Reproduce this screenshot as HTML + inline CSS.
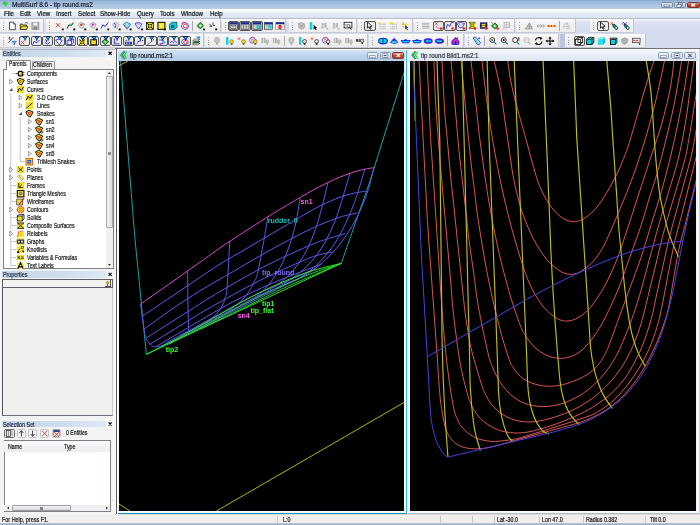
<!DOCTYPE html>
<html><head><meta charset="utf-8"><title>MultiSurf 8.6 - tip round.ms2</title>
<style>
html,body{margin:0;padding:0}
body{width:700px;height:525px;position:relative;overflow:hidden;background:#d6dcef;font-family:"Liberation Sans",sans-serif}
#r{position:absolute;left:0;top:0;width:700px;height:525px;overflow:hidden;filter:blur(0.35px)}
#r div{position:absolute;box-sizing:border-box}
#r span{position:absolute;white-space:nowrap;line-height:1;transform-origin:0 0;-webkit-text-stroke:0.22px currentColor}
#r svg{position:absolute;left:0;top:0}
</style></head><body><div id="r">
<div style="left:0px;top:0px;width:700px;height:9px;background:linear-gradient(#7d9fc8,#9ab8da 12%,#a6c1df 50%,#b8cee7);"></div>
<span style="left:12px;top:1.2px;font-size:7.4px;color:#1c1c28;transform:scaleX(0.87);">MultiSurf 8.6 - tip round.ms2</span>
<div style="left:661px;top:2px;width:11.5px;height:6px;background:linear-gradient(#dfe8f4,#b7c9e2);border:0.5px solid #7c8ea8;border-radius:1.5px"></div>
<div style="left:674px;top:2px;width:11.5px;height:6px;background:linear-gradient(#dfe8f4,#b7c9e2);border:0.5px solid #7c8ea8;border-radius:1.5px"></div>
<div style="left:687px;top:2px;width:12.5px;height:6px;background:linear-gradient(#e8a090,#c8402c 50%,#b83020);border:0.5px solid #7a3028;border-radius:1.5px"></div>
<div style="left:0px;top:8.6px;width:700px;height:10.4px;background:linear-gradient(#ffffff,#ffffff 18%,#e9eef8 30%,#dde4f2 85%,#cfd7e8);"></div>
<div style="left:0px;top:18.4px;width:700px;height:0.8px;background:#b4bccc;"></div>
<span style="left:4px;top:10.2px;font-size:7.4px;color:#101018;transform:scaleX(0.84);">File</span>
<span style="left:20px;top:10.2px;font-size:7.4px;color:#101018;transform:scaleX(0.84);">Edit</span>
<span style="left:37px;top:10.2px;font-size:7.4px;color:#101018;transform:scaleX(0.84);">View</span>
<span style="left:56px;top:10.2px;font-size:7.4px;color:#101018;transform:scaleX(0.84);">Insert</span>
<span style="left:78px;top:10.2px;font-size:7.4px;color:#101018;transform:scaleX(0.84);">Select</span>
<span style="left:100px;top:10.2px;font-size:7.4px;color:#101018;transform:scaleX(0.84);">Show-Hide</span>
<span style="left:137px;top:10.2px;font-size:7.4px;color:#101018;transform:scaleX(0.84);">Query</span>
<span style="left:160px;top:10.2px;font-size:7.4px;color:#101018;transform:scaleX(0.84);">Tools</span>
<span style="left:181px;top:10.2px;font-size:7.4px;color:#101018;transform:scaleX(0.84);">Window</span>
<span style="left:210px;top:10.2px;font-size:7.4px;color:#101018;transform:scaleX(0.84);">Help</span>
<div style="left:0px;top:19px;width:700px;height:29.5px;background:linear-gradient(#f6f8fd,#e3e7f5 8%,#d7dcef 20%,#d5dbee);"></div>
<div style="left:0px;top:514px;width:700px;height:11px;background:#f0eeee;"></div>
<div style="left:0px;top:514px;width:700px;height:0.8px;background:#dcd6d6;"></div>
<div style="left:0px;top:523.2px;width:700px;height:2px;background:linear-gradient(#c0c8d8,#98a8c0);"></div>
<span style="left:2px;top:515.6px;font-size:7.4px;color:#101010;transform:scaleX(0.735);">For Help, press F1.</span>
<span style="left:283px;top:515.6px;font-size:7.2px;color:#101010;transform:scaleX(0.735);">L:0</span>
<span style="left:497px;top:515.6px;font-size:7.2px;color:#101010;transform:scaleX(0.735);">Lat -30.0</span>
<span style="left:542px;top:515.6px;font-size:7.2px;color:#101010;transform:scaleX(0.735);">Lon 47.0</span>
<span style="left:586px;top:515.6px;font-size:7.2px;color:#101010;transform:scaleX(0.735);">Radius 0.382</span>
<span style="left:650px;top:515.6px;font-size:7.2px;color:#101010;transform:scaleX(0.735);">Tilt 0.0</span>
<div style="left:277px;top:515.5px;width:0.7px;height:7.5px;background:#c8c4c4;"></div>
<div style="left:440px;top:515.5px;width:0.7px;height:7.5px;background:#c8c4c4;"></div>
<div style="left:472px;top:515.5px;width:0.7px;height:7.5px;background:#c8c4c4;"></div>
<div style="left:494px;top:515.5px;width:0.7px;height:7.5px;background:#c8c4c4;"></div>
<div style="left:538.6px;top:515.5px;width:0.7px;height:7.5px;background:#c8c4c4;"></div>
<div style="left:582.6px;top:515.5px;width:0.7px;height:7.5px;background:#c8c4c4;"></div>
<div style="left:645px;top:515.5px;width:0.7px;height:7.5px;background:#c8c4c4;"></div>
<div style="left:115px;top:48px;width:585px;height:466px;background:#ffffff;"></div>
<div style="left:115px;top:48px;width:585px;height:1.4px;background:#707074;"></div>
<div style="left:115.5px;top:48px;width:1.5px;height:466px;background:#5c5858;"></div>
<div style="left:698.6px;top:49px;width:1.4px;height:465px;background:#d0d0d4;"></div>
<div style="left:117.6px;top:49.6px;width:288.4px;height:463.6px;background:#f0f6fc;"></div>
<div style="left:118px;top:49.8px;width:287.4px;height:11.2px;background:linear-gradient(#d4e4f4,#bcd4ec 50%,#b4cee8);"></div>
<div style="left:406px;top:49.6px;width:1px;height:464px;background:#34bce8;"></div>
<div style="left:117.6px;top:513px;width:289.4px;height:1px;background:#1898c0;"></div>
<div style="left:119px;top:61px;width:285.4px;height:450px;background:#000;"></div>
<div style="left:407px;top:49.6px;width:291.6px;height:464px;background:#f4f7fb;"></div>
<div style="left:408px;top:49.8px;width:290.4px;height:11.2px;background:linear-gradient(#f4f8fc,#e4ecf6 60%,#dce6f2);"></div>
<div style="left:407.6px;top:513px;width:291px;height:1px;background:#b8bcc4;"></div>
<div style="left:410px;top:61px;width:286px;height:449.6px;background:#000;"></div>
<span style="left:129.5px;top:52px;font-size:7.2px;color:#1a1a24;transform:scaleX(0.87);">tip round.ms2:1</span>
<span style="left:421px;top:52px;font-size:7.2px;color:#30343c;transform:scaleX(0.85);">tip round Bild1.ms2:1</span>
<div style="left:367px;top:52.3px;width:11.2px;height:6.4px;background:linear-gradient(#f0f5fb,#cfdcee);border:0.5px solid #8c9cb4;border-radius:1.5px"></div>
<div style="left:379.6px;top:52.3px;width:11px;height:6.4px;background:linear-gradient(#f0f5fb,#cfdcee);border:0.5px solid #8c9cb4;border-radius:1.5px"></div>
<div style="left:392.2px;top:52.3px;width:12.2px;height:6.4px;background:linear-gradient(#e8a898,#cc4a34 50%,#b8301c);border:0.5px solid #803428;border-radius:1.5px"></div>
<div style="left:657.8px;top:52.3px;width:11.4px;height:6.4px;background:linear-gradient(#f0f5fb,#cfdcee);border:0.5px solid #8c9cb4;border-radius:1.5px"></div>
<div style="left:671.4px;top:52.3px;width:11.2px;height:6.4px;background:linear-gradient(#f0f5fb,#cfdcee);border:0.5px solid #8c9cb4;border-radius:1.5px"></div>
<div style="left:684.4px;top:52.3px;width:11.2px;height:6.4px;background:linear-gradient(#f0f5fb,#cfdcee);border:0.5px solid #8c9cb4;border-radius:1.5px"></div>
<div style="left:0px;top:48.5px;width:115px;height:466px;background:#f4f4f4;"></div>
<div style="left:0px;top:48.5px;width:115px;height:0.8px;background:#b0b4bc;"></div>
<div style="left:1.5px;top:50px;width:104px;height:6.6px;background:linear-gradient(90deg,#c4d6ea,#cfdeef 60%,#dde8f4);"></div>
<span style="left:3px;top:50.2px;font-size:7.3px;color:#283040;transform:scaleX(0.735);">Entities</span>
<div style="left:31.6px;top:60.6px;width:23.6px;height:9px;background:#ececec;border:0.6px solid #9098a0;border-bottom:none;border-radius:1.5px 1.5px 0 0"></div>
<span style="left:33.4px;top:62.2px;font-size:6.9px;color:#181818;transform:scaleX(0.735);">Children</span>
<div style="left:2.6px;top:69px;width:111px;height:200px;background:#fff;border:0.7px solid #7c8288"></div>
<div style="left:5.6px;top:59.6px;width:25px;height:10.4px;background:#fff;border:0.6px solid #7c8288;border-bottom:none;border-radius:1.5px 1.5px 0 0"></div>
<span style="left:8.6px;top:61.4px;font-size:6.9px;color:#181818;transform:scaleX(0.735);">Parents</span>
<div style="left:105.6px;top:69.8px;width:7.4px;height:198.4px;background:#f0f0f0;"></div>
<div style="left:106px;top:76px;width:6.6px;height:152px;background:linear-gradient(90deg,#f4f4f4,#dcdcdc);border:0.5px solid #a8a8a8;border-radius:1px"></div>
<div style="left:107.6px;top:151.6px;width:3.6px;height:0.6px;background:#909090;"></div>
<div style="left:107.6px;top:153px;width:3.6px;height:0.6px;background:#909090;"></div>
<div style="left:107.6px;top:154.4px;width:3.6px;height:0.6px;background:#909090;"></div>
<span style="left:27px;top:69.8px;font-size:7.2px;color:#141414;transform:scaleX(0.735);">Components</span>
<span style="left:27px;top:77.8px;font-size:7.2px;color:#141414;transform:scaleX(0.735);">Surfaces</span>
<span style="left:27px;top:85.8px;font-size:7.2px;color:#141414;transform:scaleX(0.735);">Curves</span>
<span style="left:36.6px;top:93.8px;font-size:7.2px;color:#141414;transform:scaleX(0.735);">3-D Curves</span>
<span style="left:36.6px;top:101.8px;font-size:7.2px;color:#141414;transform:scaleX(0.735);">Lines</span>
<span style="left:36.6px;top:109.8px;font-size:7.2px;color:#141414;transform:scaleX(0.735);">Snakes</span>
<span style="left:45.7px;top:117.8px;font-size:7.2px;color:#141414;transform:scaleX(0.735);">sn1</span>
<span style="left:45.7px;top:125.8px;font-size:7.2px;color:#141414;transform:scaleX(0.735);">sn2</span>
<span style="left:45.7px;top:133.79999999999998px;font-size:7.2px;color:#141414;transform:scaleX(0.735);">sn3</span>
<span style="left:45.7px;top:141.79999999999998px;font-size:7.2px;color:#141414;transform:scaleX(0.735);">sn4</span>
<span style="left:45.7px;top:149.79999999999998px;font-size:7.2px;color:#141414;transform:scaleX(0.735);">sn5</span>
<span style="left:36.6px;top:157.79999999999998px;font-size:7.2px;color:#141414;transform:scaleX(0.735);">TriMesh Snakes</span>
<span style="left:27px;top:165.79999999999998px;font-size:7.2px;color:#141414;transform:scaleX(0.735);">Points</span>
<span style="left:27px;top:173.79999999999998px;font-size:7.2px;color:#141414;transform:scaleX(0.735);">Planes</span>
<span style="left:27px;top:181.79999999999998px;font-size:7.2px;color:#141414;transform:scaleX(0.735);">Frames</span>
<span style="left:27px;top:189.79999999999998px;font-size:7.2px;color:#141414;transform:scaleX(0.735);">Triangle Meshes</span>
<span style="left:27px;top:197.79999999999998px;font-size:7.2px;color:#141414;transform:scaleX(0.735);">Wireframes</span>
<span style="left:27px;top:205.79999999999998px;font-size:7.2px;color:#141414;transform:scaleX(0.735);">Contours</span>
<span style="left:27px;top:213.79999999999998px;font-size:7.2px;color:#141414;transform:scaleX(0.735);">Solids</span>
<span style="left:27px;top:221.79999999999998px;font-size:7.2px;color:#141414;transform:scaleX(0.735);">Composite Surfaces</span>
<span style="left:27px;top:229.79999999999998px;font-size:7.2px;color:#141414;transform:scaleX(0.735);">Relabels</span>
<span style="left:27px;top:237.79999999999998px;font-size:7.2px;color:#141414;transform:scaleX(0.735);">Graphs</span>
<span style="left:27px;top:245.79999999999998px;font-size:7.2px;color:#141414;transform:scaleX(0.735);">Knotlists</span>
<span style="left:27px;top:253.8px;font-size:7.2px;color:#141414;transform:scaleX(0.735);">Variables &amp; Formulas</span>
<span style="left:27px;top:261.8px;font-size:7.2px;color:#141414;transform:scaleX(0.735);">Text Labels</span>
<div style="left:1.5px;top:271.2px;width:104px;height:6.4px;background:linear-gradient(90deg,#c4d6ea,#cfdeef 60%,#dde8f4);"></div>
<span style="left:3px;top:271.4px;font-size:7.3px;color:#283040;transform:scaleX(0.735);">Properties</span>
<div style="left:2.4px;top:279.4px;width:111px;height:137px;background:#f0f0f0;border-left:1px solid #50505a;border-bottom:0.8px solid #70707a;border-right:0.6px solid #c8c8cc"></div>
<div style="left:2.4px;top:279.4px;width:111px;height:8.6px;background:#f2f2f2;border:0.8px solid #60606a"></div>
<div style="left:104.6px;top:280.4px;width:6.6px;height:6.8px;background:#f4f4f4;border-right:0.8px solid #505050;border-bottom:0.8px solid #505050"></div>
<div style="left:1.5px;top:421px;width:104px;height:6px;background:linear-gradient(90deg,#c4d6ea,#cfdeef 60%,#dde8f4);"></div>
<span style="left:3px;top:421.2px;font-size:7.3px;color:#283040;transform:scaleX(0.735);">Selection Set</span>
<div style="left:4.4px;top:428.6px;width:10.8px;height:9.6px;background:#ececec;border:0.7px solid #707070;border-radius:1.5px"></div>
<div style="left:16.6px;top:428.6px;width:9.6px;height:9.6px;background:#f6f6f6;border:0.5px solid #c4c4c4;border-radius:1.5px"></div>
<div style="left:27.6px;top:428.6px;width:9.6px;height:9.6px;background:#f6f6f6;border:0.5px solid #c4c4c4;border-radius:1.5px"></div>
<div style="left:39.6px;top:428.6px;width:9.6px;height:9.6px;background:#f6f6f6;border:0.5px solid #c4c4c4;border-radius:1.5px"></div>
<div style="left:51.6px;top:428.6px;width:9.6px;height:9.6px;background:#f6f6f6;border:0.5px solid #c4c4c4;border-radius:1.5px"></div>
<span style="left:66.4px;top:430px;font-size:7.1px;color:#141414;transform:scaleX(0.735);">0 Entities</span>
<div style="left:3.6px;top:440.4px;width:107.4px;height:71.6px;background:#fff;border:0.7px solid #7c8288"></div>
<div style="left:4.4px;top:441.2px;width:105.8px;height:11px;background:linear-gradient(#fbfbfb,#ececec);"></div>
<span style="left:8.4px;top:443px;font-size:7.2px;color:#141414;transform:scaleX(0.735);">Name</span>
<span style="left:64px;top:443px;font-size:7.2px;color:#141414;transform:scaleX(0.735);">Type</span>
<div style="left:4.4px;top:504.6px;width:105.8px;height:6.8px;background:#f0f0f0;"></div>
<div style="left:12.4px;top:505.2px;width:58.4px;height:5.6px;background:linear-gradient(#f6f6f6,#d8d8d8);border:0.5px solid #a0a0a0;border-radius:1px"></div>
<div style="left:39.6px;top:506.6px;width:0.6px;height:3px;background:#808080;"></div>
<div style="left:41px;top:506.6px;width:0.6px;height:3px;background:#808080;"></div>
<div style="left:42.4px;top:506.6px;width:0.6px;height:3px;background:#808080;"></div>
<div style="left:0px;top:19.4px;width:44.4px;height:13.8px;background:linear-gradient(#fbfbfb,#f1f1f1 40%,#ededed);border-right:0.6px solid #c2c6d2;border-bottom:0.6px solid #c8ccd6"></div>
<div style="left:3px;top:22.4px;width:1px;height:1px;background:#a0a4ac;"></div>
<div style="left:3px;top:24.599999999999998px;width:1px;height:1px;background:#a0a4ac;"></div>
<div style="left:3px;top:26.799999999999997px;width:1px;height:1px;background:#a0a4ac;"></div>
<div style="left:3px;top:29.0px;width:1px;height:1px;background:#a0a4ac;"></div>
<div style="left:46px;top:19.4px;width:174.8px;height:13.8px;background:linear-gradient(#fbfbfb,#f1f1f1 40%,#ededed);border-right:0.6px solid #c2c6d2;border-bottom:0.6px solid #c8ccd6"></div>
<div style="left:49px;top:22.4px;width:1px;height:1px;background:#a0a4ac;"></div>
<div style="left:49px;top:24.599999999999998px;width:1px;height:1px;background:#a0a4ac;"></div>
<div style="left:49px;top:26.799999999999997px;width:1px;height:1px;background:#a0a4ac;"></div>
<div style="left:49px;top:29.0px;width:1px;height:1px;background:#a0a4ac;"></div>
<div style="left:192px;top:21.4px;width:0.8px;height:10px;background:#a8a8b0;"></div>
<div style="left:222px;top:19.4px;width:64.39999999999998px;height:13.8px;background:linear-gradient(#fbfbfb,#f1f1f1 40%,#ededed);border-right:0.6px solid #c2c6d2;border-bottom:0.6px solid #c8ccd6"></div>
<div style="left:225px;top:22.4px;width:1px;height:1px;background:#a0a4ac;"></div>
<div style="left:225px;top:24.599999999999998px;width:1px;height:1px;background:#a0a4ac;"></div>
<div style="left:225px;top:26.799999999999997px;width:1px;height:1px;background:#a0a4ac;"></div>
<div style="left:225px;top:29.0px;width:1px;height:1px;background:#a0a4ac;"></div>
<div style="left:227.9px;top:21.0px;width:11.4px;height:10px;background:#ebebeb;border:0.9px solid #555;border-radius:2px"></div>
<div style="left:239.3px;top:21.0px;width:11.4px;height:10px;background:#ebebeb;border:0.9px solid #555;border-radius:2px"></div>
<div style="left:251.3px;top:21.0px;width:11.4px;height:10px;background:#ebebeb;border:0.9px solid #555;border-radius:2px"></div>
<div style="left:289px;top:19.4px;width:68px;height:13.8px;background:linear-gradient(#fbfbfb,#f1f1f1 40%,#ededed);border-right:0.6px solid #c2c6d2;border-bottom:0.6px solid #c8ccd6"></div>
<div style="left:292px;top:22.4px;width:1px;height:1px;background:#a0a4ac;"></div>
<div style="left:292px;top:24.599999999999998px;width:1px;height:1px;background:#a0a4ac;"></div>
<div style="left:292px;top:26.799999999999997px;width:1px;height:1px;background:#a0a4ac;"></div>
<div style="left:292px;top:29.0px;width:1px;height:1px;background:#a0a4ac;"></div>
<div style="left:358.4px;top:19.4px;width:54.60000000000002px;height:13.8px;background:linear-gradient(#fbfbfb,#f1f1f1 40%,#ededed);border-right:0.6px solid #c2c6d2;border-bottom:0.6px solid #c8ccd6"></div>
<div style="left:361.4px;top:22.4px;width:1px;height:1px;background:#a0a4ac;"></div>
<div style="left:361.4px;top:24.599999999999998px;width:1px;height:1px;background:#a0a4ac;"></div>
<div style="left:361.4px;top:26.799999999999997px;width:1px;height:1px;background:#a0a4ac;"></div>
<div style="left:361.4px;top:29.0px;width:1px;height:1px;background:#a0a4ac;"></div>
<div style="left:364.3px;top:21.0px;width:11.4px;height:10px;background:#ebebeb;border:0.9px solid #555;border-radius:2px"></div>
<div style="left:414.4px;top:19.4px;width:100.60000000000002px;height:13.8px;background:linear-gradient(#fbfbfb,#f1f1f1 40%,#ededed);border-right:0.6px solid #c2c6d2;border-bottom:0.6px solid #c8ccd6"></div>
<div style="left:417.4px;top:22.4px;width:1px;height:1px;background:#a0a4ac;"></div>
<div style="left:417.4px;top:24.599999999999998px;width:1px;height:1px;background:#a0a4ac;"></div>
<div style="left:417.4px;top:26.799999999999997px;width:1px;height:1px;background:#a0a4ac;"></div>
<div style="left:417.4px;top:29.0px;width:1px;height:1px;background:#a0a4ac;"></div>
<div style="left:432.90000000000003px;top:21.0px;width:11.4px;height:10px;background:#ebebeb;border:0.9px solid #555;border-radius:2px"></div>
<div style="left:444.3px;top:21.0px;width:11.4px;height:10px;background:#ebebeb;border:0.9px solid #555;border-radius:2px"></div>
<div style="left:455.5px;top:21.0px;width:11.4px;height:10px;background:#ebebeb;border:0.9px solid #555;border-radius:2px"></div>
<div style="left:516.4px;top:19.4px;width:60.0px;height:13.8px;background:linear-gradient(#fbfbfb,#f1f1f1 40%,#ededed);border-right:0.6px solid #c2c6d2;border-bottom:0.6px solid #c8ccd6"></div>
<div style="left:519.4px;top:22.4px;width:1px;height:1px;background:#a0a4ac;"></div>
<div style="left:519.4px;top:24.599999999999998px;width:1px;height:1px;background:#a0a4ac;"></div>
<div style="left:519.4px;top:26.799999999999997px;width:1px;height:1px;background:#a0a4ac;"></div>
<div style="left:519.4px;top:29.0px;width:1px;height:1px;background:#a0a4ac;"></div>
<div style="left:559px;top:21.4px;width:0.8px;height:10px;background:#a8a8b0;"></div>
<div style="left:590px;top:19.4px;width:44.299999999999955px;height:13.8px;background:linear-gradient(#fbfbfb,#f1f1f1 40%,#ededed);border-right:0.6px solid #c2c6d2;border-bottom:0.6px solid #c8ccd6"></div>
<div style="left:593px;top:22.4px;width:1px;height:1px;background:#a0a4ac;"></div>
<div style="left:593px;top:24.599999999999998px;width:1px;height:1px;background:#a0a4ac;"></div>
<div style="left:593px;top:26.799999999999997px;width:1px;height:1px;background:#a0a4ac;"></div>
<div style="left:593px;top:29.0px;width:1px;height:1px;background:#a0a4ac;"></div>
<div style="left:597.3px;top:21.0px;width:11.4px;height:10px;background:#ebebeb;border:0.9px solid #555;border-radius:2px"></div>
<div style="left:0px;top:34.3px;width:204px;height:13.8px;background:linear-gradient(#fbfbfb,#f1f1f1 40%,#ededed);border-right:0.6px solid #c2c6d2;border-bottom:0.6px solid #c8ccd6"></div>
<div style="left:3px;top:37.3px;width:1px;height:1px;background:#a0a4ac;"></div>
<div style="left:3px;top:39.5px;width:1px;height:1px;background:#a0a4ac;"></div>
<div style="left:3px;top:41.699999999999996px;width:1px;height:1px;background:#a0a4ac;"></div>
<div style="left:3px;top:43.9px;width:1px;height:1px;background:#a0a4ac;"></div>
<div style="left:18.8px;top:35.9px;width:11.4px;height:10px;background:#ebebeb;border:0.9px solid #555;border-radius:2px"></div>
<div style="left:30.599999999999998px;top:35.9px;width:11.4px;height:10px;background:#ebebeb;border:0.9px solid #555;border-radius:2px"></div>
<div style="left:41.9px;top:35.9px;width:11.4px;height:10px;background:#ebebeb;border:0.9px solid #555;border-radius:2px"></div>
<div style="left:53.5px;top:35.9px;width:11.4px;height:10px;background:#ebebeb;border:0.9px solid #555;border-radius:2px"></div>
<div style="left:64.89999999999999px;top:35.9px;width:11.4px;height:10px;background:#ebebeb;border:0.9px solid #555;border-radius:2px"></div>
<div style="left:76.5px;top:35.9px;width:11.4px;height:10px;background:#ebebeb;border:0.9px solid #555;border-radius:2px"></div>
<div style="left:87.89999999999999px;top:35.9px;width:11.4px;height:10px;background:#ebebeb;border:0.9px solid #555;border-radius:2px"></div>
<div style="left:99.7px;top:35.9px;width:11.4px;height:10px;background:#ebebeb;border:0.9px solid #555;border-radius:2px"></div>
<div style="left:110.89999999999999px;top:35.9px;width:11.4px;height:10px;background:#ebebeb;border:0.9px solid #555;border-radius:2px"></div>
<div style="left:122.7px;top:35.9px;width:11.4px;height:10px;background:#ebebeb;border:0.9px solid #555;border-radius:2px"></div>
<div style="left:134.10000000000002px;top:35.9px;width:11.4px;height:10px;background:#ebebeb;border:0.9px solid #555;border-radius:2px"></div>
<div style="left:145.3px;top:35.9px;width:11.4px;height:10px;background:#ebebeb;border:0.9px solid #555;border-radius:2px"></div>
<div style="left:156.5px;top:35.9px;width:11.4px;height:10px;background:#ebebeb;border:0.9px solid #555;border-radius:2px"></div>
<div style="left:167.9px;top:35.9px;width:11.4px;height:10px;background:#ebebeb;border:0.9px solid #555;border-radius:2px"></div>
<div style="left:179.3px;top:35.9px;width:11.4px;height:10px;background:#ebebeb;border:0.9px solid #555;border-radius:2px"></div>
<div style="left:205.4px;top:34.3px;width:162.6px;height:13.8px;background:linear-gradient(#fbfbfb,#f1f1f1 40%,#ededed);border-right:0.6px solid #c2c6d2;border-bottom:0.6px solid #c8ccd6"></div>
<div style="left:208.4px;top:37.3px;width:1px;height:1px;background:#a0a4ac;"></div>
<div style="left:208.4px;top:39.5px;width:1px;height:1px;background:#a0a4ac;"></div>
<div style="left:208.4px;top:41.699999999999996px;width:1px;height:1px;background:#a0a4ac;"></div>
<div style="left:208.4px;top:43.9px;width:1px;height:1px;background:#a0a4ac;"></div>
<div style="left:283.6px;top:36.3px;width:0.8px;height:10px;background:#a8a8b0;"></div>
<div style="left:369.4px;top:34.3px;width:94.60000000000002px;height:13.8px;background:linear-gradient(#fbfbfb,#f1f1f1 40%,#ededed);border-right:0.6px solid #c2c6d2;border-bottom:0.6px solid #c8ccd6"></div>
<div style="left:372.4px;top:37.3px;width:1px;height:1px;background:#a0a4ac;"></div>
<div style="left:372.4px;top:39.5px;width:1px;height:1px;background:#a0a4ac;"></div>
<div style="left:372.4px;top:41.699999999999996px;width:1px;height:1px;background:#a0a4ac;"></div>
<div style="left:372.4px;top:43.9px;width:1px;height:1px;background:#a0a4ac;"></div>
<div style="left:447px;top:36.3px;width:0.8px;height:10px;background:#a8a8b0;"></div>
<div style="left:465.4px;top:34.3px;width:93.60000000000002px;height:13.8px;background:linear-gradient(#fbfbfb,#f1f1f1 40%,#ededed);border-right:0.6px solid #c2c6d2;border-bottom:0.6px solid #c8ccd6"></div>
<div style="left:468.4px;top:37.3px;width:1px;height:1px;background:#a0a4ac;"></div>
<div style="left:468.4px;top:39.5px;width:1px;height:1px;background:#a0a4ac;"></div>
<div style="left:468.4px;top:41.699999999999996px;width:1px;height:1px;background:#a0a4ac;"></div>
<div style="left:468.4px;top:43.9px;width:1px;height:1px;background:#a0a4ac;"></div>
<div style="left:484.3px;top:36.3px;width:0.8px;height:10px;background:#a8a8b0;"></div>
<div style="left:559.6px;top:34.3px;width:5px;height:13.8px;background:#bcc4e0;"></div>
<div style="left:565px;top:34.3px;width:80.70000000000005px;height:13.8px;background:linear-gradient(#fbfbfb,#f1f1f1 40%,#ededed);border-right:0.6px solid #c2c6d2;border-bottom:0.6px solid #c8ccd6"></div>
<div style="left:568px;top:37.3px;width:1px;height:1px;background:#a0a4ac;"></div>
<div style="left:568px;top:39.5px;width:1px;height:1px;background:#a0a4ac;"></div>
<div style="left:568px;top:41.699999999999996px;width:1px;height:1px;background:#a0a4ac;"></div>
<div style="left:568px;top:43.9px;width:1px;height:1px;background:#a0a4ac;"></div>
<div style="left:573.5999999999999px;top:35.9px;width:11.4px;height:10px;background:#ebebeb;border:0.9px solid #555;border-radius:2px"></div>
<svg width="700" height="525" viewBox="0 0 700 525" font-family="Liberation Sans, sans-serif">
<path d="M2.5,4.2 L5.2,1.6 L5.2,2.8 L7.8,1.2 L8.6,3.6 L6.2,6.2 L4.6,7.2 L4.8,5.6 Z" fill="#28dc38" stroke="#e8d0f0" stroke-width="0.3"/>
<path d="M2.5,4.2 L5.2,1.6 L5.2,2.8" fill="none" stroke="#106018" stroke-width="0.5"/>
<rect x="664" y="5" width="5.4" height="1.8" fill="#fff" stroke="#44506a" stroke-width="0.5"/>
<rect x="678.6" y="3" width="4" height="2.8" fill="#e8eef8" stroke="#44506a" stroke-width="0.6"/><rect x="677" y="4.4" width="4" height="2.8" fill="#f4f8fc" stroke="#44506a" stroke-width="0.6"/>
<path d="M691.3,3.4 L695,6.6 M695,3.4 L691.3,6.6" stroke="#fff" stroke-width="1.3"/>
<path d="M123.4,51.6 L120.4,55.2 L123.4,58.800000000000004 L125,58.800000000000004 L122.6,55.2 L125,51.6 Z" fill="#20d838" stroke="#102060" stroke-width="0.4"/>
<path d="M126.2,51.6 L123.6,55.2 L126.2,58.800000000000004 L127.4,58.800000000000004 L125.2,55.2 L127.4,51.6 Z" fill="#20d838"/>
<path d="M414.4,51.6 L411.4,55.2 L414.4,58.800000000000004 L416,58.800000000000004 L413.6,55.2 L416,51.6 Z" fill="#20d838" stroke="#102060" stroke-width="0.4"/>
<path d="M417.2,51.6 L414.6,55.2 L417.2,58.800000000000004 L418.4,58.800000000000004 L416.2,55.2 L418.4,51.6 Z" fill="#20d838"/>
<rect x="369.6" y="55.8" width="6" height="1.9" fill="#fff" stroke="#4a566c" stroke-width="0.5"/>
<rect x="382.3" y="53.7" width="5.6" height="3.8" rx="0.8" fill="#fff" stroke="#4a5670" stroke-width="0.6"/><rect x="383.6" y="55.05" width="3" height="1.1" fill="#34447c"/>
<path d="M396.5,53.9 L400.1,57.1 M400.1,53.9 L396.5,57.1" stroke="#fff" stroke-width="1.2"/>
<rect x="660.5" y="55.8" width="6" height="1.9" fill="#fff" stroke="#4a566c" stroke-width="0.5"/>
<rect x="674.2" y="53.7" width="5.6" height="3.8" rx="0.8" fill="#fff" stroke="#4a5670" stroke-width="0.6"/><rect x="675.5" y="55.05" width="3" height="1.1" fill="#34447c"/>
<path d="M688.3,54.0 L691.7,57.0 M691.7,54.0 L688.3,57.0" stroke="#5a6478" stroke-width="1.1"/>
<g clip-path="url(#c1)">
<path d="M120.5,61.0 C121.0,66.8 122.4,84.3 123.3,95.9 C124.3,107.6 125.2,119.2 126.2,130.9 C127.1,142.5 128.1,154.2 129.0,165.8 C130.0,177.5 130.9,189.1 131.9,200.8 C132.8,212.4 133.6,223.3 134.7,235.7 C135.8,248.1 137.3,262.0 138.6,275.2 C139.9,288.3 141.2,301.4 142.4,314.6 C143.7,327.7 145.7,347.4 146.3,354.0" stroke="#14a4a4" stroke-width="1.0" fill="none" opacity="1.0"/>
<path d="M404.6,71.0 C402.6,77.2 396.8,95.6 392.9,108.0 C389.1,120.3 385.2,132.6 381.3,144.9 C377.5,157.3 373.2,171.2 369.7,181.9 C366.2,192.6 363.4,200.0 360.2,209.1 C357.1,218.1 353.9,227.1 350.8,236.2 C347.6,245.2 342.9,258.8 341.3,263.3" stroke="#14a4a4" stroke-width="1.0" fill="none" opacity="1.0"/>
<path d="M119.0,65.7 L127.8,61.0" stroke="#b4b418" stroke-width="1.0" fill="none" opacity="1.0"/>
<path d="M404.8,402.0 L216.5,511.0" stroke="#b4b418" stroke-width="1.0" fill="none" opacity="1.0"/>
<path d="M119.0,504.0 L130.0,511.0" stroke="#b4b418" stroke-width="1.0" fill="none" opacity="1.0"/>
<path d="M140.6,304.0 C141.2,308.4 143.2,324.3 144.1,330.0 C145.1,335.8 145.1,336.1 146.2,338.6 C147.4,341.1 149.7,343.8 150.9,345.1 C152.2,346.5 152.7,346.3 153.8,346.5 C154.9,346.8 155.5,347.0 157.4,346.7 C159.3,346.3 158.7,347.0 165.4,344.1 C172.0,341.2 187.3,334.2 197.6,329.2 C207.8,324.3 217.0,319.5 226.7,314.6 C236.4,309.7 246.1,304.8 255.8,300.0 C265.6,295.1 280.1,287.8 285.0,285.3" stroke="#5c58ea" stroke-width="1.0" fill="none" opacity="1.0"/>
<path d="M187.6,270.7 C187.7,275.6 187.7,289.3 187.9,300.0 C188.1,310.7 188.6,329.2 188.7,335.0" stroke="#5c58ea" stroke-width="1.0" fill="none" opacity="1.0"/>
<path d="M229.8,241.1 C229.3,248.7 227.9,277.7 227.1,287.2 C226.3,296.7 226.0,294.9 225.1,298.1 C224.3,301.2 223.5,303.5 222.0,306.2 C220.5,308.9 218.6,311.7 216.1,314.2 C213.7,316.8 210.9,319.2 207.5,321.5 C204.2,323.8 200.8,325.8 196.2,328.1 C191.6,330.4 182.6,334.2 179.9,335.4" stroke="#5c58ea" stroke-width="1.0" fill="none" opacity="1.0"/>
<path d="M268.0,216.7 C266.5,225.2 261.0,257.4 258.7,268.2 C256.4,279.1 255.9,277.7 254.2,281.7 C252.5,285.8 250.7,289.1 248.4,292.4 C246.1,295.7 243.6,298.7 240.4,301.7 C237.2,304.7 233.2,307.7 229.2,310.4 C225.1,313.2 222.4,314.8 215.9,318.2 C209.4,321.7 194.3,329.1 190.0,331.3" stroke="#5c58ea" stroke-width="1.0" fill="none" opacity="1.0"/>
<path d="M300.2,198.1 C299.4,202.3 297.5,215.2 295.8,222.9 C294.0,230.7 292.1,237.8 289.8,244.5 C287.6,251.2 285.1,257.4 282.3,263.1 C279.5,268.8 276.0,274.5 273.0,278.9 C270.0,283.2 267.5,286.1 264.4,289.2 C261.4,292.3 262.9,292.4 254.7,297.3 C246.4,302.3 221.6,315.3 215.0,318.9" stroke="#5c58ea" stroke-width="1.0" fill="none" opacity="1.0"/>
<path d="M328.0,182.8 C326.7,187.9 322.6,205.1 320.3,213.5 C318.0,221.8 316.4,226.8 314.2,232.9 C312.0,238.9 309.6,244.5 307.0,249.6 C304.4,254.7 301.7,259.1 298.7,263.4 C295.6,267.7 292.2,271.7 288.5,275.4 C284.7,279.1 280.8,282.3 276.3,285.5 C271.8,288.7 267.6,291.4 261.5,294.7 C255.4,298.0 243.5,303.5 239.8,305.3" stroke="#5c58ea" stroke-width="1.0" fill="none" opacity="1.0"/>
<path d="M349.9,173.3 C348.3,178.6 343.2,196.5 340.5,205.0 C337.8,213.5 336.0,218.3 333.6,224.3 C331.1,230.3 328.6,235.8 325.8,240.9 C323.0,246.0 320.3,250.4 316.9,254.9 C313.5,259.3 309.8,263.6 305.6,267.6 C301.4,271.6 296.7,275.4 291.7,278.9 C286.7,282.4 281.3,285.7 275.6,288.6 C269.9,291.4 260.7,295.0 257.7,296.2" stroke="#5c58ea" stroke-width="1.0" fill="none" opacity="1.0"/>
<path d="M365.0,168.7 C363.7,173.0 359.8,186.5 357.3,194.1 C354.8,201.7 352.4,208.1 349.7,214.4 C347.1,220.7 344.4,226.5 341.4,232.0 C338.5,237.4 335.5,242.4 332.2,247.1 C328.9,251.7 325.5,256.0 321.8,259.9 C318.2,263.9 314.2,267.5 310.2,270.6 C306.2,273.8 302.0,276.5 297.6,278.9 C293.2,281.3 286.0,284.0 283.7,285.0" stroke="#5c58ea" stroke-width="1.0" fill="none" opacity="1.0"/>
<path d="M373.8,168.0 C372.9,171.4 370.7,181.7 368.7,188.3 C366.7,194.9 364.3,201.3 361.6,207.5 C358.8,213.8 355.7,220.0 352.4,225.7 C349.1,231.4 345.5,236.8 341.6,241.9 C337.7,247.0 333.6,251.8 329.3,256.2 C324.9,260.6 320.5,264.5 315.7,268.2 C310.9,271.8 305.9,275.1 300.7,278.0 C295.6,280.8 287.5,284.1 284.9,285.3" stroke="#5c58ea" stroke-width="1.0" fill="none" opacity="1.0"/>
<path d="M142.3,316.2 C146.5,313.4 159.2,304.9 167.6,299.2 C176.1,293.5 184.5,287.9 192.9,282.2 C201.4,276.5 208.9,271.0 218.2,265.2 C227.6,259.3 238.7,253.2 248.9,247.2 C259.1,241.2 269.3,235.2 279.5,229.2 C289.7,223.2 302.3,215.6 310.1,211.3 C317.8,206.9 320.8,205.5 325.8,203.1 C330.8,200.8 335.5,198.9 340.1,197.2 C344.8,195.6 349.3,194.2 353.7,193.2 C358.1,192.2 364.4,191.4 366.5,191.1" stroke="#5c58ea" stroke-width="1.0" fill="none" opacity="1.0"/>
<path d="M144.1,329.1 C148.6,325.9 161.7,316.2 171.0,309.8 C180.3,303.5 189.7,297.2 200.0,290.8 C210.3,284.5 221.9,278.1 232.9,271.7 C243.8,265.3 254.5,258.8 265.8,252.5 C277.1,246.2 291.6,238.6 300.8,233.9 C310.0,229.2 314.5,227.1 321.1,224.3 C327.6,221.5 334.0,219.0 340.1,217.1 C346.1,215.2 354.5,213.6 357.4,212.9" stroke="#5c58ea" stroke-width="1.0" fill="none" opacity="1.0"/>
<path d="M146.3,337.9 C150.1,335.5 161.5,328.3 169.1,323.5 C176.7,318.7 184.3,313.9 191.9,309.1 C199.5,304.3 203.0,301.6 214.7,294.7 C226.5,287.8 246.9,275.7 262.3,267.6 C277.8,259.6 296.5,251.2 307.3,246.5 C318.0,241.7 320.6,241.2 327.0,239.1 C333.3,236.9 342.3,234.5 345.3,233.5" stroke="#5c58ea" stroke-width="1.0" fill="none" opacity="1.0"/>
<path d="M149.6,344.4 C154.6,341.4 169.5,332.3 179.4,326.2 C189.4,320.2 195.9,315.6 209.3,308.1 C222.6,300.5 243.5,288.8 259.4,280.7 C275.3,272.7 294.5,264.3 304.5,260.0 C314.5,255.6 314.7,256.2 319.4,254.8 C324.1,253.5 330.5,252.4 332.7,251.9" stroke="#5c58ea" stroke-width="1.0" fill="none" opacity="1.0"/>
<path d="M156.1,346.6 C161.0,343.7 175.6,335.1 185.3,329.3 C195.1,323.5 205.1,317.3 214.6,312.0 C224.0,306.6 231.6,302.3 241.8,297.3 C252.0,292.2 262.3,287.4 275.7,281.8 C289.0,276.3 314.2,266.8 321.9,263.8" stroke="#5c58ea" stroke-width="1.0" fill="none" opacity="1.0"/>
<path d="M165.2,343.5 C170.0,340.9 184.3,333.1 193.9,327.9 C203.5,322.7 213.1,317.5 222.7,312.3 C232.3,307.1 241.3,301.6 251.4,296.7 C261.6,291.7 272.9,287.3 283.7,282.6 C294.4,277.8 310.6,270.8 316.0,268.4" stroke="#5c58ea" stroke-width="1.0" fill="none" opacity="1.0"/>
<path d="M140.7,304.1 C145.3,300.8 159.4,290.9 168.7,284.3 C178.1,277.7 187.5,271.1 196.8,264.5 C206.2,257.9 214.3,251.8 224.9,244.6 C235.5,237.5 249.0,228.7 260.6,221.4 C272.2,214.0 284.6,206.6 294.4,200.8 C304.3,195.0 312.1,190.6 319.5,186.7 C327.0,182.9 332.8,180.1 339.2,177.4 C345.7,174.8 352.6,172.3 358.4,170.7 C364.2,169.1 371.4,168.1 374.0,167.6" stroke="#d848cc" stroke-width="1.0" fill="none" opacity="1.0"/>
<path d="M146.3,354.3 L341.3,263.3" stroke="#28e428" stroke-width="1.0" fill="none" opacity="1.0"/>
<path d="M146.4,354.4 C151.6,351.7 166.7,344.2 177.4,338.4 C188.1,332.6 199.6,325.9 210.8,319.6 C221.9,313.3 233.9,306.3 244.2,300.8 C254.4,295.3 261.8,291.3 272.5,286.5 C283.1,281.7 296.6,275.9 308.1,272.0 C319.6,268.2 335.8,264.7 341.4,263.3" stroke="#28e428" stroke-width="1.0" fill="none" opacity="1.0"/>
<path d="M170.0,343.6 C174.0,341.5 185.9,335.1 193.9,330.9 C201.8,326.7 209.8,322.5 217.8,318.3 C225.7,314.1 232.1,310.5 241.6,305.7 C251.2,300.8 263.8,294.3 275.0,289.1 C286.3,283.9 298.2,278.6 309.3,274.3 C320.3,270.1 336.0,265.2 341.4,263.4" stroke="#28e428" stroke-width="0.9" fill="none" opacity="1.0"/>
<path d="M200.0,329.0 C204.8,326.7 219.2,319.6 228.9,315.0 C238.5,310.3 248.1,305.6 257.7,300.9 C267.3,296.2 272.6,293.1 286.5,286.8 C300.5,280.5 332.2,267.3 341.3,263.3" stroke="#28e428" stroke-width="0.9" fill="none" opacity="1.0"/>
</g>
<text x="300.5" y="203.6" font-size="7" font-weight="bold" fill="#ff5cf0">sn1</text>
<text x="267.7" y="223.4" font-size="7" font-weight="bold" fill="#18c0c0">rudder_0</text>
<text x="262" y="274.6" font-size="7" font-weight="bold" fill="#7874ff">tip_round</text>
<text x="262" y="306" font-size="7" font-weight="bold" fill="#38ff38">tip1</text>
<text x="250.6" y="312.6" font-size="7" font-weight="bold" fill="#38ff38">tip_flat</text>
<text x="237.7" y="318.2" font-size="7" font-weight="bold" fill="#ff5cf0">sn4</text>
<text x="165.7" y="352" font-size="7" font-weight="bold" fill="#38ff38">tip2</text>
<g clip-path="url(#c2)">
<path d="M418.7,55.0 C419.0,60.5 419.9,77.0 420.4,88.1 C421.0,99.1 421.6,110.1 422.2,121.1 C422.8,132.2 423.3,143.2 423.9,154.2 C424.5,165.2 425.1,176.2 425.7,187.3 C426.2,198.3 426.7,209.0 427.4,220.3 C428.1,231.7 429.1,243.8 429.9,255.5 C430.8,267.2 431.6,278.9 432.4,290.7 C433.3,302.4 434.1,314.1 435.0,325.8 C435.8,337.6 436.6,349.3 437.5,361.0 C438.3,372.7 439.1,386.7 440.0,396.2 C441.0,405.7 442.1,412.2 443.2,418.1 C444.3,424.0 445.2,427.8 446.8,431.6 C448.4,435.3 450.2,438.1 452.6,440.6 C455.1,443.1 457.7,445.2 461.3,446.5 C465.0,447.9 469.7,448.7 474.5,448.8 C479.4,448.9 482.8,448.8 490.3,447.2 C497.9,445.6 509.9,441.8 519.7,439.1 C529.5,436.4 539.3,433.7 549.1,431.0 C558.9,428.2 571.1,425.2 578.5,422.8 C585.9,420.5 588.8,419.1 593.5,416.9 C598.1,414.8 602.2,412.6 606.3,409.9 C610.3,407.3 614.2,404.3 617.9,401.0 C621.6,397.7 624.8,394.4 628.4,390.2 C631.9,386.0 635.9,380.7 639.2,375.7 C642.6,370.6 645.5,365.7 648.5,359.9 C651.6,354.1 654.8,347.3 657.5,341.0 C660.1,334.7 662.5,328.5 664.5,322.1 C666.5,315.8 667.3,314.2 669.5,302.8 C671.7,291.4 675.3,267.0 677.9,253.9 C680.5,240.8 682.8,234.1 685.3,224.3 C687.7,214.4 690.2,204.5 692.6,194.6 C695.1,184.8 698.8,169.9 700.0,165.0" stroke="#dc5454" stroke-width="1.0" fill="none" opacity="1.0"/>
<path d="M426.8,55.0 C427.0,59.5 427.6,73.1 428.0,82.2 C428.4,91.2 428.9,100.3 429.3,109.3 C429.7,118.4 430.0,126.5 430.5,136.5 C431.1,146.5 432.0,158.6 432.7,169.6 C433.5,180.6 434.2,191.7 434.9,202.7 C435.6,213.8 436.4,224.8 437.1,235.8 C437.8,246.9 438.6,257.9 439.3,268.9 C440.0,280.0 440.5,289.5 441.5,302.0 C442.4,314.5 443.6,331.0 444.9,343.9 C446.1,356.8 447.5,368.6 449.0,379.3 C450.5,390.1 452.2,401.3 453.7,408.2 C455.2,415.2 456.8,418.0 458.1,421.1 C459.4,424.2 460.2,424.8 461.7,426.7 C463.2,428.6 465.2,430.7 467.2,432.4 C469.2,434.1 471.7,435.7 473.8,436.8 C475.9,438.0 477.6,438.7 480.0,439.4 C482.3,440.0 485.2,440.6 487.9,441.0 C490.5,441.3 491.7,441.6 495.9,441.4 C500.2,441.1 507.7,440.4 513.3,439.3 C518.8,438.3 517.2,438.8 529.3,435.1 C541.3,431.4 574.1,421.2 585.7,417.2 C597.4,413.1 595.1,413.1 599.0,410.9 C602.8,408.8 605.4,407.1 608.9,404.2 C612.4,401.4 616.3,397.7 619.9,393.8 C623.5,390.0 627.3,385.2 630.5,381.0 C633.6,376.7 636.3,372.7 638.9,368.4 C641.5,364.1 643.9,359.7 646.1,355.3 C648.3,350.8 650.3,346.2 652.1,341.6 C653.9,336.9 655.2,333.1 656.8,327.4 C658.4,321.8 659.0,320.8 661.7,307.7 C664.4,294.6 669.7,264.6 673.1,248.9 C676.5,233.1 679.1,225.1 682.1,213.2 C685.0,201.4 688.0,189.5 691.0,177.6 C694.0,165.7 698.5,147.9 700.0,142.0" stroke="#dc5454" stroke-width="1.0" fill="none" opacity="1.0"/>
<path d="M433.8,55.0 C434.1,62.6 434.6,84.2 435.5,100.5 C436.5,116.8 438.2,138.5 439.4,152.7 C440.5,166.9 441.3,174.6 442.2,185.5 C443.2,196.5 444.2,207.4 445.1,218.3 C446.1,229.3 447.0,240.2 448.0,251.2 C449.0,262.1 449.9,273.0 450.9,284.0 C451.8,294.9 452.2,303.6 453.8,316.8 C455.3,330.0 457.9,350.2 460.2,363.3 C462.5,376.4 466.0,388.4 467.8,395.3 C469.6,402.1 469.8,401.6 471.0,404.3 C472.1,407.0 473.1,409.0 474.7,411.4 C476.2,413.7 478.3,416.3 480.4,418.5 C482.5,420.6 484.9,422.6 487.4,424.3 C490.0,426.0 492.7,427.5 495.5,428.7 C498.3,429.9 500.6,430.9 504.3,431.6 C507.9,432.3 512.6,433.1 517.4,433.0 C522.3,432.9 526.8,432.5 533.4,430.9 C540.0,429.3 549.4,426.3 557.1,423.6 C564.8,420.8 573.2,417.3 579.7,414.2 C586.1,411.2 590.9,408.4 595.9,405.2 C600.9,402.0 605.4,398.6 609.5,395.1 C613.6,391.5 617.1,387.8 620.5,383.8 C623.9,379.7 626.3,376.7 629.9,370.7 C633.4,364.6 638.1,356.0 641.6,347.5 C645.2,338.9 648.6,328.5 651.2,319.2 C653.8,310.0 655.2,301.0 657.2,291.9 C659.3,282.8 661.3,273.7 663.3,264.6 C665.3,255.5 667.1,246.4 669.4,237.2 C671.6,228.1 674.3,218.8 676.8,209.6 C679.3,200.4 681.8,191.2 684.3,182.0 C686.7,172.7 689.4,164.6 691.7,154.3 C694.0,144.0 696.9,125.7 698.0,120.0" stroke="#dc5454" stroke-width="1.0" fill="none" opacity="1.0"/>
<path d="M441.7,55.0 C442.2,63.9 443.6,94.1 444.5,108.2 C445.4,122.2 446.4,129.0 447.3,139.4 C448.2,149.9 449.0,159.9 450.1,170.7 C451.1,181.6 452.5,193.3 453.7,204.6 C454.8,215.9 456.0,227.2 457.2,238.6 C458.4,249.9 459.6,261.2 460.8,272.5 C462.0,283.8 463.2,296.7 464.4,306.4 C465.5,316.1 466.5,323.1 467.8,330.7 C469.1,338.3 469.7,343.0 472.0,352.1 C474.4,361.2 479.5,378.0 481.8,385.3 C484.2,392.5 484.6,392.5 486.1,395.6 C487.6,398.7 489.1,401.3 491.0,403.8 C492.9,406.3 494.8,408.5 497.4,410.6 C499.9,412.8 503.3,415.0 506.2,416.6 C509.1,418.1 511.7,419.1 514.9,420.0 C518.1,420.9 521.5,421.7 525.5,421.9 C529.6,422.1 534.1,421.9 539.3,421.0 C544.5,420.1 551.3,418.2 556.7,416.5 C562.2,414.7 567.0,412.9 571.9,410.6 C576.8,408.2 581.6,405.6 586.2,402.6 C590.8,399.6 595.2,396.3 599.3,392.7 C603.5,389.1 607.4,385.2 611.0,381.2 C614.6,377.1 618.0,372.7 621.0,368.2 C624.0,363.8 626.6,359.2 629.1,354.2 C631.6,349.2 633.9,344.0 636.1,338.0 C638.4,332.1 640.3,326.7 642.5,318.5 C644.8,310.3 647.4,298.8 649.8,288.9 C652.2,279.0 654.7,269.1 657.1,259.3 C659.5,249.4 661.5,240.2 664.4,229.7 C667.2,219.2 670.9,207.4 674.2,196.2 C677.5,185.1 681.6,172.2 684.0,162.8 C686.5,153.4 687.0,149.7 688.7,140.1 C690.5,130.5 692.5,116.7 694.4,105.0 C696.3,93.4 699.1,75.8 700.0,70.0" stroke="#dc5454" stroke-width="1.0" fill="none" opacity="1.0"/>
<path d="M450.5,55.0 C451.0,60.3 452.4,76.3 453.4,86.9 C454.3,97.6 455.2,108.2 456.2,118.8 C457.1,129.5 458.0,140.4 459.0,150.7 C460.1,161.1 461.3,170.9 462.4,180.9 C463.6,191.0 464.7,201.0 465.8,211.1 C467.0,221.2 467.9,230.7 469.2,241.3 C470.6,251.8 472.3,263.3 473.9,274.4 C475.4,285.4 476.2,294.4 478.5,307.5 C480.9,320.5 485.7,343.1 487.9,352.7 C490.2,362.4 490.4,361.5 491.9,365.5 C493.4,369.5 495.1,373.2 496.8,376.5 C498.6,379.9 500.4,382.7 502.5,385.6 C504.6,388.4 507.1,391.2 509.4,393.4 C511.7,395.7 513.9,397.4 516.4,399.1 C518.9,400.7 521.5,402.1 524.3,403.2 C527.0,404.3 529.7,405.1 532.9,405.7 C536.1,406.2 539.6,406.6 543.3,406.6 C547.0,406.5 551.2,406.1 555.1,405.4 C558.9,404.6 562.6,403.6 566.5,402.1 C570.4,400.5 574.6,398.5 578.4,396.3 C582.3,394.0 586.0,391.4 589.5,388.6 C593.0,385.8 596.2,382.8 599.4,379.4 C602.6,376.0 605.9,372.0 608.7,368.0 C611.5,364.1 613.8,360.2 616.2,355.8 C618.6,351.4 620.4,347.7 622.9,341.7 C625.5,335.7 628.8,327.3 631.6,319.7 C634.3,312.1 636.5,305.8 639.4,295.9 C642.4,286.0 645.9,272.2 649.1,260.3 C652.4,248.5 655.6,236.0 658.8,224.8 C662.1,213.5 665.2,203.3 668.4,192.5 C671.6,181.8 675.1,171.9 677.9,160.3 C680.8,148.7 683.4,134.8 685.4,122.9 C687.5,111.0 688.6,100.3 690.2,89.0 C691.8,77.6 694.2,60.7 694.9,55.0" stroke="#dc5454" stroke-width="1.0" fill="none" opacity="1.0"/>
<path d="M460.4,55.0 C460.9,60.7 462.6,77.7 463.7,89.0 C464.8,100.3 465.9,111.7 467.0,123.0 C468.1,134.3 469.2,146.2 470.4,157.0 C471.6,167.9 472.9,177.8 474.2,188.2 C475.5,198.6 475.8,204.4 478.1,219.3 C480.4,234.3 484.4,259.3 488.1,277.7 C491.7,296.1 496.6,316.1 500.1,329.7 C503.7,343.3 507.1,353.3 509.2,359.5 C511.3,365.7 511.5,364.7 512.9,367.1 C514.3,369.4 515.8,371.7 517.6,373.7 C519.5,375.7 521.6,377.5 523.9,379.1 C526.2,380.7 528.9,382.0 531.6,383.0 C534.4,384.1 537.4,384.9 540.3,385.4 C543.2,386.0 546.3,386.3 549.3,386.3 C552.2,386.3 554.9,386.1 558.0,385.6 C561.1,385.1 564.1,384.4 567.6,383.3 C571.2,382.2 575.9,380.4 579.2,378.9 C582.6,377.3 585.5,375.6 587.9,374.1 C590.2,372.6 591.7,371.5 593.6,369.7 C595.4,367.9 597.5,365.7 599.2,363.5 C600.9,361.3 602.2,359.3 603.8,356.4 C605.3,353.5 606.0,352.9 608.6,346.3 C611.2,339.7 615.8,326.6 619.4,316.7 C623.0,306.9 626.6,297.0 630.2,287.2 C633.8,277.3 637.5,268.0 641.0,257.6 C644.5,247.2 647.8,235.6 651.2,224.6 C654.6,213.6 658.2,202.9 661.4,191.6 C664.6,180.3 667.6,168.4 670.5,156.8 C673.3,145.2 675.9,133.3 678.3,121.8 C680.6,110.3 682.7,98.9 684.6,87.8 C686.4,76.7 688.6,60.5 689.4,55.0" stroke="#dc5454" stroke-width="1.0" fill="none" opacity="1.0"/>
<path d="M470.3,54.9 C470.9,59.8 472.5,74.2 473.6,83.9 C474.7,93.5 475.8,103.2 476.9,112.8 C478.0,122.5 478.3,127.7 480.2,141.8 C482.1,155.9 485.2,179.7 488.2,197.5 C491.2,215.4 494.4,232.3 498.1,248.7 C501.8,265.1 506.6,283.1 510.3,295.8 C514.0,308.5 517.8,318.8 520.2,325.2 C522.6,331.6 523.0,331.4 524.7,334.2 C526.3,337.1 528.1,339.8 530.2,342.3 C532.2,344.8 534.6,347.3 537.0,349.3 C539.3,351.2 541.7,352.8 544.3,354.1 C546.9,355.5 549.9,356.7 552.5,357.4 C555.2,358.1 557.6,358.4 560.1,358.4 C562.6,358.4 565.0,358.2 567.6,357.5 C570.2,356.9 573.3,355.7 575.7,354.4 C578.1,353.2 579.9,351.8 582.1,350.0 C584.2,348.2 586.2,346.2 588.4,343.6 C590.7,340.9 592.8,338.1 595.4,334.2 C598.0,330.3 600.0,327.7 603.8,320.3 C607.5,313.0 613.8,300.2 618.0,289.9 C622.3,279.7 625.5,269.1 629.3,258.6 C633.0,248.2 637.0,237.7 640.5,227.3 C643.9,216.9 646.8,206.6 649.9,196.2 C653.1,185.9 655.5,179.8 659.4,165.2 C663.3,150.6 669.3,127.0 673.2,108.7 C677.1,90.3 681.1,63.9 682.6,55.0" stroke="#dc5454" stroke-width="1.0" fill="none" opacity="1.0"/>
<path d="M481.3,55.0 C482.5,64.8 485.9,95.4 488.6,113.9 C491.3,132.4 494.1,149.3 497.4,166.1 C500.6,183.0 504.3,199.4 508.2,214.9 C512.0,230.4 517.0,247.2 520.7,259.0 C524.4,270.7 527.0,278.0 530.3,285.3 C533.6,292.7 537.8,298.9 540.7,303.2 C543.5,307.5 545.1,308.7 547.3,311.0 C549.6,313.3 552.1,315.3 554.3,316.8 C556.4,318.3 558.2,319.2 560.2,320.0 C562.2,320.7 564.4,321.1 566.4,321.1 C568.5,321.2 570.7,320.7 572.7,320.1 C574.8,319.4 576.8,318.5 578.9,317.2 C580.9,316.0 583.2,314.3 585.2,312.6 C587.2,310.8 587.7,311.0 590.8,306.9 C593.9,302.8 599.6,295.0 603.7,287.8 C607.7,280.6 611.9,271.6 615.1,263.9 C618.3,256.3 620.1,250.6 623.1,242.0 C626.0,233.4 629.6,222.2 632.8,212.3 C636.0,202.4 639.3,192.5 642.5,182.6 C645.7,172.7 649.0,162.8 652.2,152.9 C655.5,143.0 658.9,134.1 661.9,123.2 C665.0,112.2 668.4,98.4 670.5,87.1 C672.6,75.7 673.9,60.3 674.6,54.9" stroke="#dc5454" stroke-width="1.0" fill="none" opacity="1.0"/>
<path d="M492.9,55.1 C494.1,61.0 498.6,79.8 500.6,90.4 C502.5,101.0 503.3,109.4 504.7,118.9 C506.1,128.4 507.5,137.8 508.9,147.3 C510.3,156.8 511.6,167.5 513.1,175.8 C514.6,184.1 516.1,190.6 517.9,197.3 C519.6,204.0 520.9,209.0 523.5,215.9 C526.1,222.8 529.9,232.1 533.4,239.0 C537.0,245.8 541.8,252.8 544.8,257.0 C547.9,261.3 549.5,262.5 551.8,264.6 C554.0,266.8 556.4,268.7 558.5,270.1 C560.5,271.5 562.3,272.4 564.2,273.1 C566.2,273.8 568.3,274.3 570.2,274.3 C572.1,274.4 573.7,274.1 575.5,273.6 C577.2,273.2 578.0,273.2 580.6,271.5 C583.2,269.8 587.9,266.7 591.2,263.4 C594.5,260.1 597.4,256.5 600.3,251.8 C603.3,247.0 604.1,245.7 608.9,234.9 C613.7,224.1 623.4,201.2 629.0,186.8 C634.6,172.4 638.1,162.2 642.5,148.3 C646.8,134.3 651.2,118.8 655.1,103.3 C659.0,87.8 664.0,63.0 665.8,55.0" stroke="#dc5454" stroke-width="1.0" fill="none" opacity="1.0"/>
<path d="M507.2,55.0 C507.6,58.3 508.5,68.0 509.7,75.1 C510.9,82.2 512.0,87.5 514.4,97.4 C516.9,107.3 521.2,122.0 524.6,134.3 C528.0,146.6 532.2,162.5 534.7,171.2 C537.2,179.8 537.7,181.2 539.7,186.1 C541.7,191.0 544.1,196.1 546.8,200.4 C549.4,204.8 552.7,209.0 555.6,212.2 C558.6,215.3 561.6,217.6 564.5,219.2 C567.5,220.8 571.0,221.4 573.3,221.7 C575.7,222.0 576.8,221.4 578.5,220.9 C580.2,220.5 581.1,220.5 583.6,218.8 C586.2,217.1 590.4,214.3 593.8,210.7 C597.2,207.1 600.4,202.7 604.0,197.1 C607.6,191.5 612.2,183.2 615.3,177.2 C618.4,171.3 620.2,166.9 622.5,161.3 C624.7,155.7 626.3,152.0 629.0,143.7 C631.6,135.3 635.2,122.2 638.4,111.5 C641.5,100.8 644.8,88.8 647.8,79.4 C650.7,70.0 654.7,59.1 656.1,55.1" stroke="#dc5454" stroke-width="1.0" fill="none" opacity="1.0"/>
<path d="M414.0,55.0 C414.0,56.0 413.8,50.0 414.0,61.0 C414.2,72.0 415.0,111.0 415.2,121.0" stroke="#c0c018" stroke-width="1.15" fill="none" opacity="1.0"/>
<path d="M436.8,55.0 C437.0,59.8 437.5,74.2 437.8,83.8 C438.1,93.4 438.5,103.0 438.8,112.7 C439.1,122.3 439.5,130.9 439.8,141.5 C440.0,152.1 440.0,164.6 440.2,176.1 C440.3,187.7 440.5,199.3 440.6,210.8 C440.7,222.4 440.9,233.9 441.0,245.5 C441.2,257.0 441.3,268.6 441.4,280.1 C441.6,291.7 441.7,303.2 441.8,314.8 C442.0,326.3 441.8,334.3 442.3,349.4 C442.7,364.6 443.5,387.9 444.5,405.7 C445.4,423.6 447.3,448.1 447.9,456.6" stroke="#c0c018" stroke-width="1.15" fill="none" opacity="1.0"/>
<path d="M461.9,55.0 C462.1,61.2 462.6,79.8 462.9,92.1 C463.2,104.5 463.5,116.9 463.8,129.3 C464.1,141.7 464.5,154.0 464.8,166.4 C465.1,178.8 465.4,191.2 465.7,203.6 C466.0,215.9 466.3,228.3 466.7,240.7 C467.0,253.1 467.3,265.5 467.6,277.8 C467.9,290.2 468.2,302.6 468.5,315.0 C468.9,327.4 469.2,339.7 469.5,352.1 C469.8,364.5 469.7,377.4 470.4,389.2 C471.1,401.1 472.6,415.3 473.6,423.4 C474.7,431.4 475.4,432.9 476.5,437.5 C477.6,442.0 479.7,448.4 480.4,450.6" stroke="#c0c018" stroke-width="1.15" fill="none" opacity="1.0"/>
<path d="M487.0,55.0 C487.1,59.5 487.4,73.3 487.7,82.5 C487.9,91.6 488.1,100.8 488.3,110.0 C488.6,119.1 488.7,126.8 489.0,137.5 C489.4,148.2 489.9,161.9 490.4,174.2 C490.9,186.4 491.3,198.6 491.8,210.9 C492.3,223.1 492.7,235.3 493.2,247.5 C493.6,259.8 494.1,272.0 494.6,284.2 C495.0,296.5 495.5,308.7 496.0,320.9 C496.4,333.1 496.9,345.4 497.3,357.6 C497.8,369.8 498.2,385.4 498.7,394.3 C499.3,403.2 499.7,405.9 500.6,411.1 C501.4,416.2 502.6,421.1 503.9,425.4 C505.2,429.6 506.7,433.8 508.3,436.6 C509.9,439.4 512.5,441.2 513.3,442.1" stroke="#c0c018" stroke-width="1.15" fill="none" opacity="1.0"/>
<path d="M513.9,54.9 C514.2,61.1 515.0,79.7 515.5,92.0 C516.0,104.4 516.5,116.8 517.1,129.1 C517.6,141.5 518.1,153.8 518.6,166.2 C519.1,178.6 519.7,190.9 520.2,203.3 C520.7,215.6 521.2,228.0 521.8,240.4 C522.3,252.7 522.8,265.1 523.3,277.5 C523.9,289.8 524.4,302.2 524.9,314.5 C525.4,326.9 525.9,339.3 526.5,351.6 C527.0,364.0 527.3,379.7 528.0,388.7 C528.7,397.7 529.4,400.6 530.6,405.8 C531.9,411.0 533.6,416.1 535.4,420.0 C537.2,424.0 539.8,427.5 541.4,429.5 C543.0,431.6 543.5,431.5 544.8,432.3 C546.1,433.0 548.5,433.7 549.2,434.0" stroke="#c0c018" stroke-width="1.15" fill="none" opacity="1.0"/>
<path d="M542.8,55.0 C543.1,60.8 543.8,78.1 544.3,89.6 C544.8,101.2 545.2,112.8 545.7,124.3 C546.2,135.9 546.7,147.4 547.2,159.0 C547.6,170.6 548.1,182.1 548.6,193.7 C549.1,205.2 549.6,216.8 550.0,228.3 C550.5,239.9 550.6,247.4 551.5,263.0 C552.3,278.6 553.7,303.3 555.1,322.0 C556.4,340.6 558.3,363.2 559.4,375.0 C560.6,386.7 560.8,387.4 561.9,392.4 C562.9,397.5 564.0,401.4 565.6,405.3 C567.1,409.2 568.9,412.7 571.2,415.9 C573.5,419.2 578.0,423.3 579.3,424.8" stroke="#c0c018" stroke-width="1.15" fill="none" opacity="1.0"/>
<path d="M573.4,55.0 C573.6,59.6 574.2,73.5 574.6,82.8 C575.0,92.0 575.3,101.3 575.7,110.6 C576.1,119.8 576.3,127.9 576.8,138.4 C577.4,148.8 578.4,161.6 579.1,173.2 C579.9,184.9 580.7,196.5 581.4,208.1 C582.2,219.7 583.0,231.3 583.7,242.9 C584.5,254.6 585.3,266.2 586.0,277.8 C586.8,289.4 587.6,301.0 588.3,312.6 C589.1,324.3 589.8,338.5 590.6,347.5 C591.5,356.4 592.3,360.5 593.6,366.3 C594.8,372.2 596.3,377.7 598.1,382.7 C599.9,387.8 601.9,392.3 604.3,396.6 C606.7,400.9 611.0,406.5 612.4,408.5" stroke="#c0c018" stroke-width="1.15" fill="none" opacity="1.0"/>
<path d="M606.3,55.0 C607.0,63.6 609.6,92.7 610.7,106.4 C611.7,120.0 612.0,126.9 612.7,137.1 C613.4,147.4 614.1,157.7 614.8,167.9 C615.5,178.2 616.2,188.4 616.9,198.7 C617.5,208.9 618.1,219.1 618.9,229.5 C619.8,239.8 621.0,250.3 622.0,260.7 C623.1,271.1 624.0,282.0 625.2,291.9 C626.3,301.8 627.8,312.4 629.1,320.1 C630.4,327.7 631.4,332.4 633.0,338.0 C634.5,343.5 636.2,348.5 638.2,353.1 C640.2,357.8 644.0,363.9 645.1,366.0" stroke="#c0c018" stroke-width="1.15" fill="none" opacity="1.0"/>
<path d="M645.2,55.1 C646.2,61.1 649.4,78.7 650.8,90.9 C652.2,103.1 652.7,115.8 653.6,128.2 C654.5,140.7 655.3,154.1 656.4,165.6 C657.5,177.0 658.4,186.4 660.2,197.0 C662.1,207.5 665.5,221.2 667.5,228.9 C669.6,236.6 670.6,238.5 672.5,243.1 C674.3,247.7 677.5,254.4 678.5,256.7" stroke="#c0c018" stroke-width="1.15" fill="none" opacity="1.0"/>
<path d="M412.8,55.0 C413.0,60.6 413.7,77.5 414.2,88.8 C414.7,100.1 415.2,111.3 415.7,122.6 C416.2,133.9 416.7,145.2 417.2,156.4 C417.6,167.7 418.1,179.0 418.6,190.2 C419.1,201.5 419.6,212.8 420.1,224.1 C420.6,235.3 420.9,245.9 421.5,257.9 C422.2,269.9 423.0,283.4 423.8,296.1 C424.5,308.9 425.2,321.6 426.0,334.4 C426.7,347.1 427.5,359.8 428.2,372.6 C428.9,385.3 429.7,401.8 430.4,410.8 C431.1,419.9 431.6,422.1 432.5,426.9 C433.5,431.8 434.6,435.9 436.0,439.8 C437.5,443.8 439.5,447.8 441.3,450.7 C443.2,453.6 446.3,456.2 447.3,457.3" stroke="#4444e4" stroke-width="1.0" fill="none" opacity="1.0"/>
<path d="M448.1,457.1 C454.0,455.7 471.8,451.5 483.6,448.6 C495.5,445.8 507.3,443.0 519.2,440.1 C531.0,437.3 544.8,434.3 554.7,431.7 C564.6,429.0 571.8,426.8 578.3,424.5 C584.8,422.2 588.6,420.4 593.5,417.9 C598.5,415.4 603.4,412.6 607.8,409.6 C612.3,406.6 616.5,403.4 620.4,400.0 C624.2,396.6 627.6,393.2 631.0,389.2 C634.4,385.3 637.6,381.2 640.7,376.4 C643.9,371.7 647.1,366.2 649.9,360.7 C652.8,355.3 655.3,349.7 657.7,343.7 C660.2,337.6 662.1,332.6 664.5,324.6 C666.8,316.6 669.6,306.4 672.0,295.8 C674.4,285.1 676.7,272.5 679.0,260.9 C681.3,249.2 683.7,236.8 686.0,226.0 C688.3,215.1 690.7,205.9 693.0,195.9 C695.3,185.9 698.8,170.9 700.0,165.9" stroke="#4444e4" stroke-width="1.0" fill="none" opacity="1.0"/>
<path d="M427.0,356.9 C432.5,353.7 449.1,344.1 460.2,337.7 C471.3,331.4 482.3,325.0 493.4,318.6 C504.4,312.3 515.9,305.4 526.6,299.5 C537.2,293.6 547.4,288.2 557.1,283.3 C566.9,278.4 575.5,274.2 584.9,270.0 C594.2,265.8 604.3,261.5 613.1,258.1 C621.9,254.7 629.6,252.1 637.6,249.7 C645.5,247.4 653.3,245.4 660.9,244.0 C668.4,242.5 679.3,241.4 683.0,240.9" stroke="#4444e4" stroke-width="1.0" fill="none" opacity="1.0"/>
</g>
<defs><clipPath id="c1"><rect x="119" y="61" width="285.4" height="450"/></clipPath><clipPath id="c2"><rect x="410" y="61" width="286" height="449.6"/></clipPath></defs>
<path d="M108.6,51.8 L111.6,54.8 M111.6,51.8 L108.6,54.8" stroke="#101010" stroke-width="1.25"/>
<path d="M107.8,74 L109.4,72 L111,74 Z" fill="#404040"/>
<path d="M107.8,264 L109.4,266 L111,264 Z" fill="#404040"/>
<path d="M10.8,93 V265.6" stroke="#c4c4c4" stroke-width="0.9"/>
<path d="M20.2,117 V161.6" stroke="#c0c0c0" stroke-width="0.9"/>
<path d="M11,73.6 H16.2" stroke="#a0a0a0" stroke-width="0.6"/>
<path d="M15.8,73.6 H18.8" stroke="#101010" stroke-width="0.8"/><rect x="18.400000000000002" y="71.3" width="4" height="4.6" rx="1" fill="#f4e020" stroke="#101010" stroke-width="1.3"/><path d="M22.4,72.3 H24.4 M22.4,74.89999999999999 H24.4" stroke="#101010" stroke-width="0.9"/>
<path d="M9.7,79.3 L12.8,81.6 L9.7,83.89999999999999 Z" fill="#fff" stroke="#787878" stroke-width="0.75"/>
<path d="M17.1,79.8 L20.2,78.3 L24.3,80.0 L21.5,85.2 L18.900000000000002,83.8 Z" fill="#f4e020" stroke="#101010" stroke-width="1"/>
<path d="M19.0,80.4 L22.200000000000003,80.8 L20.6,83.2 Z" fill="none" stroke="#b08010" stroke-width="0.9"/>
<path d="M12.4,88.0 L12.4,91.0 L9.4,91.0 Z" fill="#303030"/>
<rect x="16.8" y="86.0" width="7.4" height="7.2" fill="#f4e020"/><path d="M17.6,92.0 L19.400000000000002,88.2 L21.4,90.6 L23.4,87.0" fill="none" stroke="#101010" stroke-width="1"/>
<path d="M19.099999999999998,95.3 L22.2,97.6 L19.099999999999998,99.89999999999999 Z" fill="#fff" stroke="#787878" stroke-width="0.75"/>
<rect x="25.6" y="94.0" width="7.4" height="7.2" fill="#f4e020"/><path d="M26.400000000000002,100.0 L28.200000000000003,96.2 L30.200000000000003,98.6 L32.2,95.0" fill="none" stroke="#101010" stroke-width="1"/>
<path d="M19.099999999999998,103.3 L22.2,105.6 L19.099999999999998,107.89999999999999 Z" fill="#fff" stroke="#787878" stroke-width="0.75"/>
<rect x="25.6" y="102.0" width="7.4" height="7.2" fill="#f4e020"/><path d="M26.200000000000003,108.4 L32.4,102.8" stroke="#101010" stroke-width="0.9"/>
<path d="M21.799999999999997,112.0 L21.799999999999997,115.0 L18.799999999999997,115.0 Z" fill="#303030"/>
<path d="M25.900000000000002,111.8 L29.0,110.3 L33.1,112.0 L30.3,117.2 L27.700000000000003,115.8 Z" fill="#f4e020" stroke="#101010" stroke-width="1"/>
<path d="M27.8,112.4 L31.0,112.8 L29.400000000000002,115.2 Z" fill="none" stroke="#e03020" stroke-width="0.9"/>
<path d="M28.4,119.3 L31.5,121.6 L28.4,123.89999999999999 Z" fill="#fff" stroke="#787878" stroke-width="0.75"/>
<path d="M35.5,119.8 L38.6,118.3 L42.7,120.0 L39.900000000000006,125.2 L37.300000000000004,123.8 Z" fill="#f4e020" stroke="#101010" stroke-width="1"/>
<path d="M37.400000000000006,120.4 L40.6,120.8 L39.0,123.2 Z" fill="none" stroke="#e03020" stroke-width="0.9"/>
<path d="M28.4,127.3 L31.5,129.6 L28.4,131.9 Z" fill="#fff" stroke="#787878" stroke-width="0.75"/>
<path d="M35.5,127.8 L38.6,126.3 L42.7,128.0 L39.900000000000006,133.2 L37.300000000000004,131.8 Z" fill="#f4e020" stroke="#101010" stroke-width="1"/>
<path d="M37.400000000000006,128.4 L40.6,128.8 L39.0,131.2 Z" fill="none" stroke="#e03020" stroke-width="0.9"/>
<circle cx="41.800000000000004" cy="132.0" r="1.2" fill="none" stroke="#101010" stroke-width="0.7"/>
<path d="M28.4,135.29999999999998 L31.5,137.6 L28.4,139.9 Z" fill="#fff" stroke="#787878" stroke-width="0.75"/>
<path d="M35.5,135.8 L38.6,134.3 L42.7,136.0 L39.900000000000006,141.2 L37.300000000000004,139.8 Z" fill="#f4e020" stroke="#101010" stroke-width="1"/>
<path d="M37.400000000000006,136.4 L40.6,136.8 L39.0,139.2 Z" fill="none" stroke="#e03020" stroke-width="0.9"/>
<circle cx="41.800000000000004" cy="140.0" r="1.2" fill="none" stroke="#101010" stroke-width="0.7"/>
<path d="M28.4,143.29999999999998 L31.5,145.6 L28.4,147.9 Z" fill="#fff" stroke="#787878" stroke-width="0.75"/>
<path d="M35.5,143.8 L38.6,142.3 L42.7,144.0 L39.900000000000006,149.2 L37.300000000000004,147.8 Z" fill="#f4e020" stroke="#101010" stroke-width="1"/>
<path d="M37.400000000000006,144.4 L40.6,144.8 L39.0,147.2 Z" fill="none" stroke="#e03020" stroke-width="0.9"/>
<path d="M28.4,151.29999999999998 L31.5,153.6 L28.4,155.9 Z" fill="#fff" stroke="#787878" stroke-width="0.75"/>
<path d="M35.5,151.8 L38.6,150.3 L42.7,152.0 L39.900000000000006,157.2 L37.300000000000004,155.8 Z" fill="#f4e020" stroke="#101010" stroke-width="1"/>
<path d="M37.400000000000006,152.4 L40.6,152.8 L39.0,155.2 Z" fill="none" stroke="#e03020" stroke-width="0.9"/>
<path d="M20.4,161.6 H25.0" stroke="#a0a0a0" stroke-width="0.6"/>
<rect x="26.0" y="158.4" width="6.6" height="6.6" fill="#f4e020" stroke="#d06018" stroke-width="1"/><rect x="27.900000000000002" y="160.3" width="2.8" height="2.8" fill="#40c8e0" stroke="#2030c0" stroke-width="0.8"/>
<path d="M9.7,167.29999999999998 L12.8,169.6 L9.7,171.9 Z" fill="#fff" stroke="#787878" stroke-width="0.75"/>
<rect x="16.8" y="166.0" width="7.4" height="7.2" fill="#f4e020"/><path d="M18.400000000000002,167.6 L22.6,171.6 M22.6,167.6 L18.400000000000002,171.6" stroke="#101010" stroke-width="0.9"/>
<path d="M9.7,175.29999999999998 L12.8,177.6 L9.7,179.9 Z" fill="#fff" stroke="#787878" stroke-width="0.75"/>
<path d="M17.2,176.6 L20.2,174.6 L24.0,178.4 L21.200000000000003,180.8 Z" fill="#f8f0a0" stroke="#a09020" stroke-width="0.6"/><path d="M17.8,175.0 L23.4,180.4" stroke="#606060" stroke-width="0.6" stroke-dasharray="1 0.6"/>
<path d="M11,185.6 H16.2" stroke="#a0a0a0" stroke-width="0.6"/>
<rect x="16.8" y="182.0" width="7.4" height="7.2" fill="#f4e020"/><path d="M18.8,183.0 V187.6 H23.200000000000003 M18.8,187.6 L21.8,184.8" fill="none" stroke="#101010" stroke-width="0.8"/>
<path d="M11,193.6 H16.2" stroke="#a0a0a0" stroke-width="0.6"/>
<rect x="17.3" y="190.5" width="6.6" height="6.4" fill="#f4e020" stroke="#101010" stroke-width="1.1"/><circle cx="20.6" cy="193.7" r="1.5" fill="#8890c0" stroke="#404890" stroke-width="0.5"/>
<path d="M11,201.6 H16.2" stroke="#a0a0a0" stroke-width="0.6"/>
<rect x="16.8" y="199.0" width="6" height="6" fill="#f4e020" stroke="#101010" stroke-width="0.6"/><path d="M18.8,204.6 L24.200000000000003,198.4" stroke="#c020c0" stroke-width="1.3"/>
<path d="M9.7,207.29999999999998 L12.8,209.6 L9.7,211.9 Z" fill="#fff" stroke="#787878" stroke-width="0.75"/>
<ellipse cx="20.6" cy="209.6" rx="3.5" ry="3.2" fill="#f4e020" stroke="#e03020" stroke-width="0.8"/><ellipse cx="20.6" cy="209.6" rx="1.6" ry="1.4" fill="none" stroke="#e03020" stroke-width="0.7"/>
<path d="M11,217.6 H16.2" stroke="#a0a0a0" stroke-width="0.6"/>
<rect x="17.2" y="216.0" width="5" height="5" fill="#f4e020" stroke="#101010" stroke-width="0.8"/><path d="M17.2,216.0 L19.2,214.4 H24.0 V219.0 L22.200000000000003,221.0  M22.200000000000003,216.0 L24.0,214.4" fill="none" stroke="#101010" stroke-width="0.8"/>
<path d="M11,225.6 H16.2" stroke="#a0a0a0" stroke-width="0.6"/>
<rect x="17.0" y="222.4" width="7" height="6.6" fill="#f4e020"/><path d="M17.400000000000002,223.0 L20.400000000000002,225.6 L17.400000000000002,228.4 M23.8,223.0 L20.400000000000002,225.6 L23.8,228.4 M17.400000000000002,223.0 H23.8 M17.400000000000002,228.4 H23.8" fill="none" stroke="#101010" stroke-width="0.8"/>
<path d="M9.7,231.29999999999998 L12.8,233.6 L9.7,235.9 Z" fill="#fff" stroke="#787878" stroke-width="0.75"/>
<rect x="17.8" y="231.6" width="6" height="5.4" fill="#f4e020"/><path d="M17.400000000000002,236.8 L18.8,231.6 L23.8,230.8" fill="none" stroke="#e02020" stroke-width="0.9" stroke-dasharray="1.4 0.7"/>
<path d="M11,241.6 H16.2" stroke="#a0a0a0" stroke-width="0.6"/>
<rect x="16.8" y="238.2" width="7.4" height="6.8" fill="#f4e020"/><rect x="16.8" y="239.6" width="7.4" height="4" fill="#181878"/><rect x="17.8" y="240.6" width="2" height="2" fill="#f4e020"/><rect x="21.0" y="240.6" width="2.2" height="2" fill="#f4e020"/>
<path d="M11,249.6 H16.2" stroke="#a0a0a0" stroke-width="0.6"/>
<rect x="16.8" y="246.2" width="7.4" height="6.8" fill="#f4e020"/><path d="M18.400000000000002,252.6 L18.400000000000002,250.0 L21.4,248.6" fill="none" stroke="#101010" stroke-width="0.7" stroke-dasharray="1 0.7"/><rect x="17.2" y="251.4" width="2" height="1.8" fill="#101010"/><rect x="21.4" y="246.6" width="2" height="1.8" fill="#f4e020" stroke="#101010" stroke-width="0.5"/><rect x="22.4" y="250.6" width="1.6" height="1.6" fill="#101010"/>
<path d="M11,257.6 H16.2" stroke="#a0a0a0" stroke-width="0.6"/>
<rect x="16.8" y="255.00000000000003" width="7.4" height="5.2" fill="#f4e020"/><path d="M17.6,256.0 L20.0,259.20000000000005 M20.0,256.0 L17.6,259.20000000000005 M21.0,257.0 H23.6 M21.0,258.40000000000003 H23.6" stroke="#101010" stroke-width="0.7"/>
<path d="M11,265.6 H16.2" stroke="#a0a0a0" stroke-width="0.6"/>
<rect x="16.8" y="262.4" width="7.4" height="6.8" fill="#f8f060"/><path d="M17.8,268.8 L20.5,262.8 L23.200000000000003,268.8 M18.8,266.8 H22.200000000000003" fill="none" stroke="#101010" stroke-width="1.2"/>
<path d="M108.6,272.9 L111.6,275.9 M111.6,272.9 L108.6,275.9" stroke="#101010" stroke-width="1.25"/>
<circle cx="107.6" cy="282.6" r="1.3" fill="#e8d820" stroke="#504800" stroke-width="0.5"/><path d="M107.6,283.8 V286.4" stroke="#504800" stroke-width="0.9"/>
<path d="M108.6,422.5 L111.6,425.5 M111.6,422.5 L108.6,425.5" stroke="#101010" stroke-width="1.25"/>
<rect x="6.4" y="430.4" width="4" height="6" fill="none" stroke="#303030" stroke-width="0.7"/><path d="M8.4,430.4 V436.4" stroke="#303030" stroke-width="0.5"/><path d="M12,430.6 V436.4" stroke="#303030" stroke-width="0.8" stroke-dasharray="1 0.8"/>
<path d="M21.4,436.4 V431 M19.4,433 L21.4,430.6 L23.4,433" fill="none" stroke="#282828" stroke-width="0.9"/>
<path d="M32.6,430.6 V436 M30.6,434 L32.6,436.4 L34.6,434" fill="none" stroke="#282828" stroke-width="0.9"/>
<path d="M42,430.6 L47.4,436.4 M47.4,430.6 L42,436.4" stroke="#e03030" stroke-width="0.9"/>
<rect x="53.6" y="430" width="6" height="2" fill="#3040a0"/><rect x="53.6" y="430" width="6" height="6.6" fill="none" stroke="#505050" stroke-width="0.5"/><path d="M54.2,432.2 L59,436.4 M59,432.2 L54.2,436.4" stroke="#e03030" stroke-width="0.9"/>
<path d="M9,506.4 L7,508 L9,509.6 Z" fill="#303030"/><path d="M106,506.4 L108,508 L106,509.6 Z" fill="#303030"/>
<g transform="translate(12.5,26.0) scale(0.88) translate(-12.5,-26.0)">
<polygon points="9.1,21.6 13.5,21.6 15.7,23.8 15.7,30.2 9.1,30.2" fill="#fff" stroke="#101010" stroke-width="0.8"/>
<path d="M13.5,21.6 L13.5,23.8 L15.7,23.8" fill="none" stroke="#101010" stroke-width="0.6"/>
</g>
<g transform="translate(24.0,26.0) scale(0.88) translate(-24.0,-26.0)">
<polygon points="19.8,23.8 22.4,23.8 23.2,24.8 27.0,24.8 27.0,29.8 19.8,29.8" fill="#e8d020" stroke="#101010" stroke-width="0.8"/>
<polygon points="21.4,26.4 28.4,26.4 27.0,29.8 19.8,29.8" fill="#f8e848" stroke="#101010" stroke-width="0.7"/>
<path d="M25.0,22.8 L27.0,21.8 L28.0,23.4" fill="none" stroke="#101010" stroke-width="0.7"/>
</g>
<g transform="translate(35.4,26.0) scale(0.88) translate(-35.4,-26.0)">
<rect x="31.4" y="22.0" width="8" height="8" fill="#b8b8b8" stroke="#808080" stroke-width="0.7"/>
<rect x="33.2" y="22.2" width="4.4" height="3" fill="#f0f0f0"/>
<rect x="33.4" y="27.0" width="4" height="3" fill="#888"/>
</g>
<g transform="translate(59.5,26.0) scale(0.88) translate(-59.5,-26.0)">
<path d="M55.5,22.6 L59.9,27.4" fill="none" stroke="#f02020" stroke-width="0.9"/>
<path d="M59.9,22.6 L55.5,27.4" fill="none" stroke="#f02020" stroke-width="0.9"/>
<rect x="62.1" y="28.8" width="2.2" height="2.2" fill="#101010"/>
</g>
<g transform="translate(71.0,26.0) scale(0.88) translate(-71.0,-26.0)">
<path d="M66.6,29.0 L68.4,25.0 L71.4,25.6 L73.8,22.0" fill="none" stroke="#101010" stroke-width="1.0"/>
<circle cx="70.6" cy="24.6" r="1.3" fill="#20d040"/>
<rect x="73.6" y="28.8" width="2.2" height="2.2" fill="#101010"/>
</g>
<g transform="translate(82.0,26.0) scale(0.88) translate(-82.0,-26.0)">
<polygon points="77.6,24.0 81.0,21.8 85.0,23.8 83.0,28.6 79.6,27.4" fill="#e8e8e8" stroke="#909090" stroke-width="0.7"/>
<path d="M79.6,27.4 L81.2,24.4 L85.0,23.8" fill="none" stroke="#909090" stroke-width="0.6"/>
<circle cx="81.2" cy="24.6" r="1.3" fill="#f02020"/>
<rect x="84.6" y="28.8" width="2.2" height="2.2" fill="#101010"/>
</g>
<g transform="translate(93.5,26.0) scale(0.88) translate(-93.5,-26.0)">
<polygon points="89.1,24.0 92.5,21.8 96.5,23.8 94.5,28.6 91.1,27.4" fill="#e8e8e8" stroke="#909090" stroke-width="0.7"/>
<path d="M91.1,27.4 L92.7,24.4 L96.5,23.8" fill="none" stroke="#909090" stroke-width="0.6"/>
<circle cx="92.7" cy="24.6" r="1.3" fill="#e020e0"/>
<rect x="96.1" y="28.8" width="2.2" height="2.2" fill="#101010"/>
</g>
<g transform="translate(105.0,26.0) scale(0.88) translate(-105.0,-26.0)">
<path d="M100.6,29.0 L102.6,24.6 L105.2,26.6 L108.6,22.0" fill="none" stroke="#2428e0" stroke-width="1.1"/>
<rect x="107.6" y="28.8" width="2.2" height="2.2" fill="#101010"/>
</g>
<g transform="translate(116.4,26.0) scale(0.88) translate(-116.4,-26.0)">
<polygon points="112.0,24.0 115.4,21.8 119.4,23.8 117.4,28.6 114.0,27.4" fill="#e4e4e8" stroke="#9090a0" stroke-width="0.7"/>
<path d="M113.8,22.6 L115.8,25.2 L114.6,28.0" fill="none" stroke="#2428e0" stroke-width="1.0"/>
<rect x="119.0" y="28.8" width="2.2" height="2.2" fill="#101010"/>
</g>
<g transform="translate(127.4,26.0) scale(0.88) translate(-127.4,-26.0)">
<polygon points="122.8,24.0 126.4,21.6 131.0,24.0 127.0,29.6" fill="#a8ecf4" stroke="#2428e0" stroke-width="0.8"/>
<path d="M124.4,22.8 L127.0,29.6 L128.8,22.8" fill="none" stroke="#18d0d8" stroke-width="0.7"/>
<path d="M122.8,24.0 L127.0,29.6" fill="none" stroke="#f02020" stroke-width="0.5"/>
<rect x="130.0" y="28.8" width="2.2" height="2.2" fill="#101010"/>
</g>
<g transform="translate(138.8,26.0) scale(0.88) translate(-138.8,-26.0)">
<polygon points="134.4,23.4 138.2,21.8 142.4,23.6 138.8,29.6" fill="#f0f0ff" stroke="#2428e0" stroke-width="0.9"/>
<path d="M136.2,23.6 L140.4,24.0" fill="none" stroke="#2428e0" stroke-width="0.6"/>
<rect x="141.4" y="28.8" width="2.2" height="2.2" fill="#101010"/>
</g>
<g transform="translate(150.0,26.0) scale(0.88) translate(-150.0,-26.0)">
<rect x="146.0" y="22.0" width="7.8" height="7.8" fill="#f0e018"/>
<path d="M146.0,22.0 L153.8,29.8" fill="none" stroke="#101010" stroke-width="1.1"/>
<path d="M153.8,22.0 L146.0,29.8" fill="none" stroke="#101010" stroke-width="1.1"/>
<rect x="146.0" y="22.0" width="7.8" height="7.8" fill="none" stroke="#101010" stroke-width="0.9"/>
<rect x="148.4" y="24.4" width="3" height="3" fill="#f0e018" stroke="#101010" stroke-width="0.7"/>
</g>
<g transform="translate(161.6,26.0) scale(0.88) translate(-161.6,-26.0)">
<rect x="157.4" y="21.8" width="8" height="8" fill="#f0e018" stroke="#101010" stroke-width="1.2"/>
<rect x="159.2" y="23.6" width="4.4" height="4.4" fill="#f8f060"/>
<rect x="164.2" y="28.8" width="2.2" height="2.2" fill="#101010"/>
</g>
<g transform="translate(173.4,26.0) scale(0.88) translate(-173.4,-26.0)">
<polygon points="169.0,24.0 171.4,21.8 177.4,21.8 177.4,27.6 175.0,30.0 169.0,30.0" fill="#18c8d0" stroke="#084858" stroke-width="0.8"/>
<rect x="170.8" y="25.0" width="3.6" height="3.4" fill="#0c6c78"/>
</g>
<g transform="translate(185.0,26.0) scale(0.88) translate(-185.0,-26.0)">
<ellipse cx="185.0" cy="26.0" rx="4" ry="3.8" fill="#f8e8e8" stroke="#2428e0" stroke-width="0.8"/>
<ellipse cx="185.4" cy="26.0" rx="2.2" ry="2.2" fill="none" stroke="#f02020" stroke-width="0.8"/>
<path d="M181.0,23.0 L183.0,21.6 L186.0,22.0" fill="none" stroke="#f02020" stroke-width="0.7"/>
</g>
<g transform="translate(200.7,26.0) scale(0.88) translate(-200.7,-26.0)">
<polygon points="196.5,25.6 200.3,21.8 204.1,25.6 200.3,29.4" fill="#30c040" stroke="#101010" stroke-width="0.7"/>
<polygon points="198.7,25.6 200.3,24.0 201.9,25.6 200.3,27.2" fill="#e8ffe8"/>
<rect x="203.3" y="28.8" width="2.2" height="2.2" fill="#101010"/>
</g>
<g transform="translate(213.0,26.0) scale(0.88) translate(-213.0,-26.0)">
<path d="M209.0,23.6 L211.6,26.4 L209.0,26.4" fill="none" stroke="#101010" stroke-width="0.9"/>
<path d="M213.0,22.0 L213.0,25.4 L215.4,25.4" fill="none" stroke="#101010" stroke-width="0.8"/>
<rect x="215.6" y="28.8" width="2.2" height="2.2" fill="#101010"/>
</g>
<g transform="translate(233.6,26.0) scale(0.88) translate(-233.6,-26.0)">
<rect x="229.0" y="22.0" width="9.2" height="8" fill="#c8c8c8" stroke="#303030" stroke-width="0.7"/>
<rect x="229.0" y="22.0" width="9.2" height="2.2" fill="#1828a0"/>
<rect x="230.6" y="25.4" width="5.6" height="3.2" fill="#f8f8f8" stroke="#101010" stroke-width="0.5"/>
<path d="M231.6,27.0 L235.0,27.0" fill="none" stroke="#101010" stroke-width="0.6"/>
</g>
<g transform="translate(245.0,26.0) scale(0.88) translate(-245.0,-26.0)">
<rect x="240.4" y="22.0" width="9.2" height="8" fill="#c8c8c8" stroke="#303030" stroke-width="0.7"/>
<rect x="240.4" y="22.0" width="9.2" height="2.2" fill="#1828a0"/>
<path d="M243.4,24.2 L243.4,30.0" fill="none" stroke="#505050" stroke-width="0.6"/>
<path d="M246.4,24.2 L246.4,30.0" fill="none" stroke="#505050" stroke-width="0.6"/>
</g>
<g transform="translate(257.0,26.0) scale(0.88) translate(-257.0,-26.0)">
<rect x="252.4" y="22.0" width="9.2" height="8" fill="#c8c8c8" stroke="#303030" stroke-width="0.7"/>
<rect x="252.4" y="22.0" width="9.2" height="2.2" fill="#1828a0"/>
<polygon points="257.0,23.6 257.0,29.6 258.6,28.2 260.0,30.6 261.0,30.0 259.8,27.8 261.6,27.4" fill="#18d0d8" stroke="#0890a0" stroke-width="0.4"/>
</g>
<g transform="translate(268.6,26.0) scale(0.88) translate(-268.6,-26.0)">
<rect x="264.0" y="22.0" width="9.2" height="8" fill="#c8c8c8" stroke="#303030" stroke-width="0.7"/>
<rect x="264.0" y="22.0" width="9.2" height="2.2" fill="#1828a0"/>
<polygon points="270.0,23.4 271.0,25.6 273.4,25.8 271.4,27.0 272.2,29.4 270.0,28.0 268.0,29.4 268.6,27.0 266.8,25.8 269.0,25.6" fill="#18d0d8"/>
</g>
<g transform="translate(280.0,26.0) scale(0.88) translate(-280.0,-26.0)">
<rect x="275.4" y="22.0" width="9.2" height="8" fill="#c8c8c8" stroke="#303030" stroke-width="0.7"/>
<rect x="275.4" y="22.0" width="9.2" height="2.2" fill="#1828a0"/>
<rect x="275.4" y="24.2" width="9.2" height="5.8" fill="#e8e8f0"/>
<ellipse cx="280.0" cy="27.2" rx="2" ry="2.6" fill="#f02020"/>
</g>
<g transform="translate(302.0,26.0) scale(0.88) translate(-302.0,-26.0)">
<polygon points="298.0,23.0 301.0,22.0 305.0,23.6 305.0,28.0 301.6,29.6 298.4,28.0" fill="#c4c4c4" stroke="#9c9c9c" stroke-width="0.7"/>
<path d="M299.0,24.0 L304.0,28.0" fill="none" stroke="#909090" stroke-width="0.7"/>
<path d="M304.0,24.0 L299.0,28.0" fill="none" stroke="#909090" stroke-width="0.7"/>
</g>
<g transform="translate(313.6,26.0) scale(0.88) translate(-313.6,-26.0)">
<rect x="309.2" y="21.6" width="3" height="8.6" fill="#18d0d8"/>
<polygon points="313.6,24.6 313.6,30.0 315.0,28.8 316.0,30.8 317.0,30.2 316.0,28.4 317.6,28.2" fill="#101010"/>
</g>
<g transform="translate(325.0,26.0) scale(0.88) translate(-325.0,-26.0)">
<rect x="321.0" y="22.6" width="2.4" height="6.4" fill="#c0c0c0"/>
<rect x="324.2" y="22.6" width="2.4" height="5" fill="#b4b4b4"/>
<path d="M326.6,27.4 L328.6,29.6 L326.0,29.6" fill="none" stroke="#a0a0a0" stroke-width="0.8"/>
</g>
<g transform="translate(336.4,26.0) scale(0.88) translate(-336.4,-26.0)">
<rect x="332.4" y="22.6" width="2.4" height="6.4" fill="#c0c0c0"/>
<rect x="335.6" y="22.6" width="2.4" height="5" fill="#b4b4b4"/>
<path d="M338.0,27.4 L340.0,29.6 L337.4,29.6" fill="none" stroke="#a0a0a0" stroke-width="0.8"/>
</g>
<g transform="translate(348.0,26.0) scale(0.88) translate(-348.0,-26.0)">
<rect x="343.6" y="21.8" width="8.8" height="6.4" fill="#fff" stroke="#101010" stroke-width="0.9"/>
<ellipse cx="348.6" cy="26.0" rx="1.8" ry="1.8" fill="#fff" stroke="#101010" stroke-width="0.7"/>
<path d="M349.8,27.4 L351.8,30.0" fill="none" stroke="#101010" stroke-width="1.1"/>
<path d="M344.8,24.6 L346.6,24.6" fill="none" stroke="#101010" stroke-width="0.6"/>
</g>
<g transform="translate(370.0,26.0) scale(0.88) translate(-370.0,-26.0)">
<polygon points="367.2,21.6 367.2,28.4 368.9,26.9 370.1,29.6 371.3,29.0 370.1,26.5 372.4,26.3" fill="#fff" stroke="#101010" stroke-width="1.0"/>
</g>
<g transform="translate(382.0,26.0) scale(0.88) translate(-382.0,-26.0)">
<path d="M380.6,22.6 L380.6,30.0" fill="none" stroke="#a0a0a0" stroke-width="0.6" stroke-dasharray="0.8 0.8"/>
<path d="M378.4,24.2 L386.2,24.2" fill="none" stroke="#a0a0a0" stroke-width="0.6" stroke-dasharray="0.8 0.8"/>
<path d="M383.0,22.6 L383.0,30.0" fill="none" stroke="#a0a0a0" stroke-width="0.6" stroke-dasharray="0.8 0.8"/>
<path d="M378.4,26.6 L386.2,26.6" fill="none" stroke="#a0a0a0" stroke-width="0.6" stroke-dasharray="0.8 0.8"/>
<path d="M385.4,22.6 L385.4,30.0" fill="none" stroke="#a0a0a0" stroke-width="0.6" stroke-dasharray="0.8 0.8"/>
<path d="M378.4,29.0 L386.2,29.0" fill="none" stroke="#a0a0a0" stroke-width="0.6" stroke-dasharray="0.8 0.8"/>
<circle cx="379.0" cy="23.0" r="1.3" fill="#f0e018"/>
</g>
<g transform="translate(393.6,26.0) scale(0.88) translate(-393.6,-26.0)">
<path d="M392.2,22.6 L392.2,30.0" fill="none" stroke="#a0a0a0" stroke-width="0.6" stroke-dasharray="0.8 0.8"/>
<path d="M390.0,24.2 L397.8,24.2" fill="none" stroke="#a0a0a0" stroke-width="0.6" stroke-dasharray="0.8 0.8"/>
<path d="M394.6,22.6 L394.6,30.0" fill="none" stroke="#a0a0a0" stroke-width="0.6" stroke-dasharray="0.8 0.8"/>
<path d="M390.0,26.6 L397.8,26.6" fill="none" stroke="#a0a0a0" stroke-width="0.6" stroke-dasharray="0.8 0.8"/>
<path d="M397.0,22.6 L397.0,30.0" fill="none" stroke="#a0a0a0" stroke-width="0.6" stroke-dasharray="0.8 0.8"/>
<path d="M390.0,29.0 L397.8,29.0" fill="none" stroke="#a0a0a0" stroke-width="0.6" stroke-dasharray="0.8 0.8"/>
<rect x="389.2" y="22.0" width="4" height="1.8" fill="#f0e018"/>
</g>
<g transform="translate(405.0,26.0) scale(0.88) translate(-405.0,-26.0)">
<path d="M401.0,24.0 L408.0,24.0" fill="none" stroke="#f0e018" stroke-width="1.6"/>
<path d="M403.0,21.6 L403.0,28.0" fill="none" stroke="#f02020" stroke-width="0.7" stroke-dasharray="0.8 0.6"/>
<polygon points="405.0,24.6 405.0,30.0 406.4,28.8 407.4,30.8 408.4,30.2 407.4,28.4 409.0,28.2" fill="#404040"/>
<path d="M401.0,27.0 L404.0,27.0" fill="none" stroke="#a0a0a0" stroke-width="0.6" stroke-dasharray="0.8 0.8"/>
</g>
<g transform="translate(425.7,26.0) scale(0.88) translate(-425.7,-26.0)">
<path d="M421.5,23.0 L429.9,23.0" fill="none" stroke="#a8a8a8" stroke-width="0.9"/>
<path d="M421.5,24.8 L429.9,24.8" fill="none" stroke="#a8a8a8" stroke-width="0.9"/>
<path d="M421.5,26.6 L429.9,26.6" fill="none" stroke="#a8a8a8" stroke-width="0.9"/>
<path d="M421.5,28.4 L429.9,28.4" fill="none" stroke="#a8a8a8" stroke-width="0.9"/>
<path d="M424.1,22.4 L424.1,29.0" fill="none" stroke="#c0c0c0" stroke-width="0.5"/>
<path d="M427.1,22.4 L427.1,29.0" fill="none" stroke="#c0c0c0" stroke-width="0.5"/>
</g>
<g transform="translate(438.6,26.0) scale(0.88) translate(-438.6,-26.0)">
<path d="M434.4,21.8 L437.6,25.0" fill="none" stroke="#f02020" stroke-width="0.8"/>
<path d="M437.6,21.8 L434.4,25.0" fill="none" stroke="#f02020" stroke-width="0.8"/>
<path d="M435.6,26.0 L437.6,28.6 L440.6,28.8" fill="none" stroke="#c04040" stroke-width="0.7"/>
<rect x="439.2" y="22.0" width="3" height="3" fill="#e4e4e4"/>
<circle cx="441.6" cy="28.8" r="1.5" fill="#f02020"/>
</g>
<g transform="translate(450.0,26.0) scale(0.88) translate(-450.0,-26.0)">
<path d="M446.0,29.0 L447.0,24.0 L450.0,26.4 L451.4,22.4 L454.0,22.0" fill="none" stroke="#2428e0" stroke-width="1.0"/>
<circle cx="453.0" cy="28.8" r="1.5" fill="#f02020"/>
</g>
<g transform="translate(461.2,26.0) scale(0.88) translate(-461.2,-26.0)">
<polygon points="456.8,23.6 460.2,21.8 465.0,23.0 462.8,27.6 459.2,28.0" fill="#e8e8f4" stroke="#2428e0" stroke-width="0.9"/>
<path d="M456.8,23.6 L461.2,25.0 L465.0,23.0" fill="none" stroke="#8080c0" stroke-width="0.5"/>
<circle cx="464.2" cy="28.8" r="1.5" fill="#f02020"/>
</g>
<g transform="translate(472.6,26.0) scale(0.88) translate(-472.6,-26.0)">
<rect x="468.6" y="21.8" width="7" height="7" fill="#f0e018"/>
<path d="M468.6,21.8 L475.6,28.8" fill="none" stroke="#101010" stroke-width="0.8"/>
<path d="M475.6,21.8 L468.6,28.8" fill="none" stroke="#101010" stroke-width="0.8"/>
<ellipse cx="472.1" cy="25.3" rx="1.6" ry="1.6" fill="#f0e018" stroke="#101010" stroke-width="0.5"/>
<path d="M468.6,21.8 L475.6,21.8" fill="none" stroke="#101010" stroke-width="0.6"/>
<path d="M468.6,28.8 L475.6,28.8" fill="none" stroke="#101010" stroke-width="0.6"/>
<circle cx="475.6" cy="28.8" r="1.5" fill="#f02020"/>
</g>
<g transform="translate(483.8,26.0) scale(0.88) translate(-483.8,-26.0)">
<rect x="479.4" y="21.8" width="8.4" height="7.4" fill="#202890"/>
<rect x="481.0" y="23.2" width="5" height="4.6" fill="#f0e018" stroke="#101010" stroke-width="0.5"/>
<path d="M479.4,25.4 L487.8,25.4" fill="none" stroke="#101010" stroke-width="0.5"/>
<circle cx="486.8" cy="28.8" r="1.5" fill="#f02020"/>
</g>
<g transform="translate(495.0,26.0) scale(0.88) translate(-495.0,-26.0)">
<path d="M490.6,21.6 L493.0,24.0" fill="none" stroke="#f02020" stroke-width="0.7"/>
<polygon points="491.0,26.0 494.8,22.4 498.4,26.0 494.8,29.4" fill="#30c040" stroke="#101010" stroke-width="0.7"/>
<polygon points="493.4,26.0 494.8,24.6 496.2,26.0 494.8,27.4" fill="#d8f8d8"/>
<circle cx="498.0" cy="28.8" r="1.5" fill="#f02020"/>
</g>
<g transform="translate(506.4,26.0) scale(0.88) translate(-506.4,-26.0)">
<path d="M503.8,22.0 L510.0,22.0 L510.0,27.4 L503.8,27.4 L503.8,22.0" fill="none" stroke="#a8a8a8" stroke-width="0.9"/>
<path d="M506.8,22.0 L506.8,27.4" fill="none" stroke="#b0b0b0" stroke-width="0.7"/>
<path d="M503.8,24.6 L510.0,24.6" fill="none" stroke="#b0b0b0" stroke-width="0.7"/>
<path d="M503.8,27.4 L502.2,30.0" fill="none" stroke="#a8a8a8" stroke-width="0.8"/>
<path d="M506.8,27.4 L505.4,30.0" fill="none" stroke="#b0b0b0" stroke-width="0.8"/>
</g>
<g transform="translate(529.0,26.0) scale(0.88) translate(-529.0,-26.0)">
<polygon points="524.8,29.4 529.6,22.4 533.0,29.4" fill="#c8c8c8" stroke="#8c8c8c" stroke-width="0.8"/>
<path d="M529.6,22.4 L529.2,29.4" fill="none" stroke="#8c8c8c" stroke-width="0.6"/>
<path d="M527.0,26.0 L533.0,27.0" fill="none" stroke="#8c8c8c" stroke-width="0.5"/>
</g>
<g transform="translate(540.7,26.0) scale(0.88) translate(-540.7,-26.0)">
<path d="M536.3,26.0 L545.1,26.0" fill="none" stroke="#9c9c9c" stroke-width="0.9"/>
<path d="M538.3,24.0 L536.5,26.0 L538.3,28.0" fill="none" stroke="#9c9c9c" stroke-width="0.9"/>
<path d="M540.1,24.0 L541.9,26.0 L540.1,28.0" fill="none" stroke="#9c9c9c" stroke-width="0.9"/>
<path d="M543.1,24.0 L544.9,26.0 L543.1,28.0" fill="none" stroke="#9c9c9c" stroke-width="0.9"/>
</g>
<g transform="translate(551.4,26.0) scale(0.88) translate(-551.4,-26.0)">
<path d="M546.8,26.0 L556.0,26.0" fill="none" stroke="#f0e018" stroke-width="2.0"/>
<circle cx="548.0" cy="26.0" r="1.0" fill="#f02020"/>
<circle cx="551.4" cy="26.0" r="1.0" fill="#f02020"/>
<circle cx="554.8" cy="26.0" r="1.0" fill="#f02020"/>
</g>
<g transform="translate(567.0,26.0) scale(0.88) translate(-567.0,-26.0)">
<path d="M563.6,23.0 L563.6,29.0" fill="none" stroke="#a8a8a8" stroke-width="0.7"/>
<rect x="565.0" y="22.2" width="3.4" height="2" fill="#c0c0c0"/>
<rect x="566.6" y="25.4" width="3.4" height="2" fill="#c0c0c0"/>
<rect x="566.6" y="28.0" width="3.4" height="1.6" fill="#c0c0c0"/>
<path d="M563.6,26.4 L566.6,26.4" fill="none" stroke="#a8a8a8" stroke-width="0.6"/>
</g>
<g transform="translate(603.0,26.0) scale(0.88) translate(-603.0,-26.0)">
<polygon points="600.2,21.6 600.2,28.4 601.9,26.9 603.1,29.6 604.3,29.0 603.1,26.5 605.4,26.3" fill="#fff" stroke="#101010" stroke-width="1.0"/>
</g>
<g transform="translate(614.4,26.0) scale(0.88) translate(-614.4,-26.0)">
<path d="M610.0,21.6 L613.0,24.6" fill="none" stroke="#f02020" stroke-width="0.8"/>
<path d="M613.0,21.6 L610.0,24.6" fill="none" stroke="#f02020" stroke-width="0.8"/>
<polygon points="612.4,24.0 615.0,24.4 618.4,27.8 618.0,29.6 616.0,30.0 612.8,26.6" fill="#108888" stroke="#101010" stroke-width="0.7"/>
<circle cx="616.6" cy="28.2" r="1.0" fill="#e0f0f0"/>
</g>
<g transform="translate(625.8,26.0) scale(0.88) translate(-625.8,-26.0)">
<path d="M621.6,24.4 L623.2,21.8 L625.0,24.0 L626.8,21.8" fill="none" stroke="#2428e0" stroke-width="0.9"/>
<polygon points="623.8,24.0 626.4,24.4 629.8,27.8 629.4,29.6 627.4,30.0 624.2,26.6" fill="#108888" stroke="#101010" stroke-width="0.7"/>
<circle cx="628.0" cy="28.2" r="1.0" fill="#e0f0f0"/>
</g>
<g transform="translate(12.5,40.9) scale(0.88) translate(-12.5,-40.9)">
<path d="M8.1,37.5 L9.3,36.5 L9.3,39.9" fill="none" stroke="#101010" stroke-width="0.8"/>
<path d="M7.9,42.9 L13.5,36.5" fill="none" stroke="#101010" stroke-width="0.8"/>
<polygon points="11.9,41.3 17.1,41.3 14.5,44.3" fill="#18d0d8" stroke="#2428e0" stroke-width="0.5"/>
<path d="M14.5,43.9 L14.5,45.7" fill="none" stroke="#101060" stroke-width="0.9"/>
</g>
<g transform="translate(24.5,40.9) scale(0.88) translate(-24.5,-40.9)">
<polygon points="22.7,36.1 27.5,36.1 25.1,39.3" fill="#18d0d8" stroke="#101058" stroke-width="0.9"/>
<path d="M25.1,38.9 L25.1,40.7" fill="none" stroke="#101058" stroke-width="1.0"/>
<path d="M20.5,40.9 L24.1,44.7" fill="none" stroke="#f02020" stroke-width="0.9"/>
<path d="M24.1,40.9 L20.5,44.7" fill="none" stroke="#f02020" stroke-width="0.9"/>
</g>
<g transform="translate(36.3,40.9) scale(0.88) translate(-36.3,-40.9)">
<polygon points="34.5,36.1 39.3,36.1 36.9,39.3" fill="#18d0d8" stroke="#101058" stroke-width="0.9"/>
<path d="M36.9,38.9 L36.9,40.7" fill="none" stroke="#101058" stroke-width="1.0"/>
<path d="M32.1,44.9 L34.1,41.3 L36.7,43.1 L39.9,39.9" fill="none" stroke="#2428e0" stroke-width="1.1"/>
</g>
<g transform="translate(47.6,40.9) scale(0.88) translate(-47.6,-40.9)">
<polygon points="45.8,36.1 50.6,36.1 48.2,39.3" fill="#18d0d8" stroke="#101058" stroke-width="0.9"/>
<path d="M48.2,38.9 L48.2,40.7" fill="none" stroke="#101058" stroke-width="1.0"/>
<path d="M44.6,39.3 L47.0,40.9 L45.2,42.9 L47.2,44.7 L50.2,42.5" fill="none" stroke="#2428e0" stroke-width="1.0"/>
</g>
<g transform="translate(59.2,40.9) scale(0.88) translate(-59.2,-40.9)">
<polygon points="57.4,36.1 62.2,36.1 59.8,39.3" fill="#18d0d8" stroke="#101058" stroke-width="0.9"/>
<path d="M59.8,38.9 L59.8,40.7" fill="none" stroke="#101058" stroke-width="1.0"/>
<polygon points="55.2,39.9 58.6,38.9 62.6,40.3 59.2,45.3" fill="#f0f0ff" stroke="#2428e0" stroke-width="0.9"/>
</g>
<g transform="translate(70.6,40.9) scale(0.88) translate(-70.6,-40.9)">
<polygon points="68.8,36.1 73.6,36.1 71.2,39.3" fill="#18d0d8" stroke="#101058" stroke-width="0.9"/>
<path d="M71.2,38.9 L71.2,40.7" fill="none" stroke="#101058" stroke-width="1.0"/>
<rect x="66.6" y="40.7" width="5" height="4.4" fill="none" stroke="#2428e0" stroke-width="0.9"/>
<path d="M66.6,40.7 L68.6,38.9 L74.0,38.9 L74.0,43.3 L71.6,45.1" fill="none" stroke="#2428e0" stroke-width="0.9"/>
<path d="M71.6,40.7 L74.0,38.9" fill="none" stroke="#2428e0" stroke-width="0.8"/>
</g>
<g transform="translate(82.2,40.9) scale(0.88) translate(-82.2,-40.9)">
<polygon points="80.4,36.1 85.2,36.1 82.8,39.3" fill="#18d0d8" stroke="#101058" stroke-width="0.9"/>
<path d="M82.8,38.9 L82.8,40.7" fill="none" stroke="#101058" stroke-width="1.0"/>
<rect x="78.8" y="39.3" width="6.6" height="6" fill="#f0e018"/>
<path d="M78.8,39.3 L85.4,45.3" fill="none" stroke="#101010" stroke-width="1.0"/>
<path d="M85.4,39.3 L78.8,45.3" fill="none" stroke="#101010" stroke-width="1.0"/>
<rect x="80.8" y="41.1" width="2.6" height="2.4" fill="#f0e018" stroke="#101010" stroke-width="0.6"/>
<polygon points="80.4,36.1 85.2,36.1 82.8,39.3" fill="#18d0d8" stroke="#101058" stroke-width="0.9"/>
<path d="M82.8,38.9 L82.8,40.7" fill="none" stroke="#101058" stroke-width="1.0"/>
</g>
<g transform="translate(93.6,40.9) scale(0.88) translate(-93.6,-40.9)">
<polygon points="91.8,36.1 96.6,36.1 94.2,39.3" fill="#18d0d8" stroke="#101058" stroke-width="0.9"/>
<path d="M94.2,38.9 L94.2,40.7" fill="none" stroke="#101058" stroke-width="1.0"/>
<rect x="90.4" y="39.5" width="6.4" height="5.8" fill="#f0e018" stroke="#101010" stroke-width="1.1"/>
<polygon points="91.8,36.1 96.6,36.1 94.2,39.3" fill="#18d0d8" stroke="#101058" stroke-width="0.9"/>
<path d="M94.2,38.9 L94.2,40.7" fill="none" stroke="#101058" stroke-width="1.0"/>
</g>
<g transform="translate(105.4,40.9) scale(0.88) translate(-105.4,-40.9)">
<polygon points="103.6,36.1 108.4,36.1 106.0,39.3" fill="#18d0d8" stroke="#101058" stroke-width="0.9"/>
<path d="M106.0,38.9 L106.0,40.7" fill="none" stroke="#101058" stroke-width="1.0"/>
<polygon points="101.4,41.9 105.2,38.5 109.0,41.9 105.2,45.3" fill="#30c040" stroke="#101010" stroke-width="0.7"/>
<polygon points="103.8,41.9 105.2,40.5 106.6,41.9 105.2,43.3" fill="#d8f8d8"/>
<polygon points="103.6,36.1 108.4,36.1 106.0,39.3" fill="#18d0d8" stroke="#101058" stroke-width="0.9"/>
<path d="M106.0,38.9 L106.0,40.7" fill="none" stroke="#101058" stroke-width="1.0"/>
</g>
<g transform="translate(116.6,40.9) scale(0.88) translate(-116.6,-40.9)">
<polygon points="114.8,36.1 119.6,36.1 117.2,39.3" fill="#18d0d8" stroke="#101058" stroke-width="0.9"/>
<path d="M117.2,38.9 L117.2,40.7" fill="none" stroke="#101058" stroke-width="1.0"/>
<path d="M114.0,37.9 L114.0,44.3 L120.0,44.3" fill="none" stroke="#2428e0" stroke-width="1.0"/>
<path d="M114.0,44.3 L117.6,40.9" fill="none" stroke="#2428e0" stroke-width="0.7" stroke-dasharray="1 0.8"/>
</g>
<g transform="translate(128.4,40.9) scale(0.88) translate(-128.4,-40.9)">
<polygon points="126.6,36.1 131.4,36.1 129.0,39.3" fill="#18d0d8" stroke="#101058" stroke-width="0.9"/>
<path d="M129.0,38.9 L129.0,40.7" fill="none" stroke="#101058" stroke-width="1.0"/>
<rect x="124.4" y="41.9" width="8" height="3.2" fill="#1828a0"/>
<rect x="125.8" y="42.9" width="1.6" height="1.2" fill="#fff"/>
<rect x="128.8" y="42.9" width="1.6" height="1.2" fill="#fff"/>
<path d="M124.8,40.3 L127.4,40.3" fill="none" stroke="#101010" stroke-width="0.6"/>
</g>
<g transform="translate(139.8,40.9) scale(0.88) translate(-139.8,-40.9)">
<polygon points="138.0,36.1 142.8,36.1 140.4,39.3" fill="#18d0d8" stroke="#101058" stroke-width="0.9"/>
<path d="M140.4,38.9 L140.4,40.7" fill="none" stroke="#101058" stroke-width="1.0"/>
<path d="M135.8,44.9 L138.2,41.5 L143.6,40.3" fill="none" stroke="#2428e0" stroke-width="1.1" stroke-dasharray="1.6 1"/>
<circle cx="138.2" cy="41.5" r="0.9" fill="#2428e0"/>
</g>
<g transform="translate(151.0,40.9) scale(0.88) translate(-151.0,-40.9)">
<polygon points="149.2,36.1 154.0,36.1 151.6,39.3" fill="#18d0d8" stroke="#101058" stroke-width="0.9"/>
<path d="M151.6,38.9 L151.6,40.7" fill="none" stroke="#101058" stroke-width="1.0"/>
<path d="M147.0,45.1 L154.6,39.1" fill="none" stroke="#2428e0" stroke-width="1.1" stroke-dasharray="1.6 1"/>
</g>
<g transform="translate(162.2,40.9) scale(0.88) translate(-162.2,-40.9)">
<polygon points="160.4,36.1 165.2,36.1 162.8,39.3" fill="#18d0d8" stroke="#101058" stroke-width="0.9"/>
<path d="M162.8,38.9 L162.8,40.7" fill="none" stroke="#101058" stroke-width="1.0"/>
<path d="M158.6,39.9 L163.2,39.9 L163.2,43.9 L159.2,44.5" fill="none" stroke="#2428e0" stroke-width="1.0"/>
<rect x="163.2" y="41.3" width="2.6" height="2.6" fill="#18d0d8"/>
<circle cx="160.2" cy="44.3" r="1" fill="#e020e0"/>
</g>
<g transform="translate(173.6,40.9) scale(0.88) translate(-173.6,-40.9)">
<polygon points="171.8,36.1 176.6,36.1 174.2,39.3" fill="#18d0d8" stroke="#101058" stroke-width="0.9"/>
<path d="M174.2,38.9 L174.2,40.7" fill="none" stroke="#101058" stroke-width="1.0"/>
<path d="M169.6,42.9 L171.6,41.3 L173.6,42.9 L175.6,41.3 L177.6,42.9" fill="none" stroke="#2428e0" stroke-width="1.0"/>
<path d="M170.0,44.9 L177.2,44.9" fill="none" stroke="#2428e0" stroke-width="0.8" stroke-dasharray="1.4 0.8"/>
</g>
<g transform="translate(185.0,40.9) scale(0.88) translate(-185.0,-40.9)">
<polygon points="183.2,36.1 188.0,36.1 185.6,39.3" fill="#18d0d8" stroke="#101058" stroke-width="0.9"/>
<path d="M185.6,38.9 L185.6,40.7" fill="none" stroke="#101058" stroke-width="1.0"/>
<ellipse cx="185.0" cy="42.1" rx="3.8" ry="3.2" fill="#f8e8e8" stroke="#2428e0" stroke-width="0.8"/>
<ellipse cx="185.4" cy="42.3" rx="2" ry="1.8" fill="none" stroke="#f02020" stroke-width="0.8"/>
<polygon points="183.2,36.1 188.0,36.1 185.6,39.3" fill="#18d0d8" stroke="#101058" stroke-width="0.9"/>
<path d="M185.6,38.9 L185.6,40.7" fill="none" stroke="#101058" stroke-width="1.0"/>
</g>
<g transform="translate(196.4,40.9) scale(0.88) translate(-196.4,-40.9)">
<polygon points="192.0,43.3 194.4,41.3 200.4,41.3 198.2,43.3" fill="#30c040" stroke="#101010" stroke-width="0.6"/>
<polygon points="192.0,45.3 194.4,43.5 200.4,43.5 198.2,45.3" fill="#fff" stroke="#101010" stroke-width="0.6"/>
<polygon points="192.0,40.9 194.4,38.9 200.4,38.9 198.2,40.9" fill="#fff" stroke="#101010" stroke-width="0.6"/>
<polygon points="196.8,36.3 200.8,36.3 198.8,38.7" fill="#18d0d8" stroke="#2428e0" stroke-width="0.5"/>
</g>
<g transform="translate(217.0,40.9) scale(0.88) translate(-217.0,-40.9)">
<ellipse cx="217.0" cy="39.9" rx="3" ry="3.2" fill="#c8c8c8" stroke="#9a9a9a" stroke-width="0.6"/>
<rect x="215.8" y="42.9" width="2.4" height="2.2" fill="#a8a8a8"/>
</g>
<g transform="translate(230.0,40.9) scale(0.88) translate(-230.0,-40.9)">
<rect x="225.4" y="36.5" width="2.8" height="8.8" fill="#18d0d8"/>
<ellipse cx="231.8" cy="41.7" rx="2.1" ry="2.2" fill="#f0e018" stroke="#303030" stroke-width="0.5"/>
<rect x="230.8" y="43.7" width="2" height="1.6" fill="#505050"/>
</g>
<g transform="translate(242.0,40.9) scale(0.88) translate(-242.0,-40.9)">
<path d="M237.4,36.9 L240.0,39.7" fill="none" stroke="#f02020" stroke-width="0.8"/>
<path d="M240.0,36.9 L237.4,39.7" fill="none" stroke="#f02020" stroke-width="0.8"/>
<ellipse cx="243.8" cy="41.7" rx="2.1" ry="2.2" fill="#f0e018" stroke="#303030" stroke-width="0.5"/>
<rect x="242.8" y="43.7" width="2" height="1.6" fill="#505050"/>
</g>
<g transform="translate(253.6,40.9) scale(0.88) translate(-253.6,-40.9)">
<ellipse cx="252.4" cy="40.3" rx="3.4" ry="3.2" fill="#fff" stroke="#2428e0" stroke-width="0.8"/>
<path d="M250.2,37.9 L252.2,36.7 L254.6,37.5" fill="none" stroke="#f02020" stroke-width="0.8"/>
<ellipse cx="252.2" cy="40.5" rx="1.4" ry="1.4" fill="none" stroke="#f02020" stroke-width="0.7"/>
<ellipse cx="255.6" cy="41.7" rx="2.1" ry="2.2" fill="#f0e018" stroke="#303030" stroke-width="0.5"/>
<rect x="254.6" y="43.7" width="2" height="1.6" fill="#505050"/>
</g>
<g transform="translate(265.0,40.9) scale(0.88) translate(-265.0,-40.9)">
<rect x="260.8" y="37.5" width="2" height="6" fill="#bcbcbc"/>
<rect x="263.4" y="37.5" width="2" height="6" fill="#b0b0b0"/>
<ellipse cx="267.4" cy="41.5" rx="1.8" ry="2" fill="#c4c4c4" stroke="#9a9a9a" stroke-width="0.5"/>
<rect x="266.6" y="43.5" width="1.6" height="1.6" fill="#a0a0a0"/>
</g>
<g transform="translate(276.4,40.9) scale(0.88) translate(-276.4,-40.9)">
<rect x="272.2" y="37.5" width="2" height="6" fill="#bcbcbc"/>
<rect x="274.8" y="37.5" width="2" height="6" fill="#b0b0b0"/>
<ellipse cx="278.8" cy="41.5" rx="1.8" ry="2" fill="#c4c4c4" stroke="#9a9a9a" stroke-width="0.5"/>
<rect x="278.0" y="43.5" width="1.6" height="1.6" fill="#a0a0a0"/>
</g>
<g transform="translate(291.4,40.9) scale(0.88) translate(-291.4,-40.9)">
<ellipse cx="291.4" cy="39.9" rx="3" ry="3.2" fill="#c8c8c8" stroke="#9a9a9a" stroke-width="0.6"/>
<rect x="290.2" y="42.9" width="2.4" height="2.2" fill="#a8a8a8"/>
</g>
<g transform="translate(303.0,40.9) scale(0.88) translate(-303.0,-40.9)">
<rect x="298.4" y="36.5" width="2.8" height="8.8" fill="#18d0d8"/>
<ellipse cx="304.8" cy="41.5" rx="2.1" ry="2.2" fill="#e8e8e8" stroke="#101010" stroke-width="0.8"/>
<rect x="303.8" y="43.7" width="2" height="1.6" fill="#101010"/>
</g>
<g transform="translate(315.0,40.9) scale(0.88) translate(-315.0,-40.9)">
<path d="M310.4,36.9 L313.0,39.7" fill="none" stroke="#f02020" stroke-width="0.8"/>
<path d="M313.0,36.9 L310.4,39.7" fill="none" stroke="#f02020" stroke-width="0.8"/>
<ellipse cx="316.8" cy="41.5" rx="2.1" ry="2.2" fill="#e8e8e8" stroke="#101010" stroke-width="0.8"/>
<rect x="315.8" y="43.7" width="2" height="1.6" fill="#101010"/>
</g>
<g transform="translate(326.4,40.9) scale(0.88) translate(-326.4,-40.9)">
<ellipse cx="325.2" cy="40.3" rx="3.4" ry="3.2" fill="#fff" stroke="#2428e0" stroke-width="0.8"/>
<path d="M323.0,37.9 L325.0,36.7 L327.4,37.5" fill="none" stroke="#f02020" stroke-width="0.8"/>
<ellipse cx="325.0" cy="40.5" rx="1.4" ry="1.4" fill="none" stroke="#f02020" stroke-width="0.7"/>
<ellipse cx="328.4" cy="41.7" rx="2" ry="2.1" fill="#e8e8e8" stroke="#101010" stroke-width="0.8"/>
<rect x="327.4" y="43.7" width="2" height="1.6" fill="#101010"/>
</g>
<g transform="translate(337.4,40.9) scale(0.88) translate(-337.4,-40.9)">
<rect x="333.2" y="37.5" width="2" height="6" fill="#bcbcbc"/>
<rect x="335.8" y="37.5" width="2" height="6" fill="#b0b0b0"/>
<ellipse cx="339.8" cy="41.5" rx="1.8" ry="2" fill="#c4c4c4" stroke="#9a9a9a" stroke-width="0.5"/>
<rect x="339.0" y="43.5" width="1.6" height="1.6" fill="#a0a0a0"/>
</g>
<g transform="translate(348.8,40.9) scale(0.88) translate(-348.8,-40.9)">
<rect x="344.6" y="37.5" width="2" height="6" fill="#bcbcbc"/>
<rect x="347.2" y="37.5" width="2" height="6" fill="#b0b0b0"/>
<ellipse cx="351.2" cy="41.5" rx="1.8" ry="2" fill="#c4c4c4" stroke="#9a9a9a" stroke-width="0.5"/>
<rect x="350.4" y="43.5" width="1.6" height="1.6" fill="#a0a0a0"/>
</g>
<g transform="translate(360.0,40.9) scale(0.88) translate(-360.0,-40.9)">
<rect x="355.4" y="38.9" width="2.6" height="3" fill="#404040"/>
<rect x="358.4" y="38.9" width="2.4" height="3" fill="#505050"/>
<ellipse cx="362.6" cy="40.9" rx="1.8" ry="2" fill="#e8e8e8" stroke="#101010" stroke-width="0.7"/>
<rect x="361.8" y="42.9" width="1.6" height="1.6" fill="#101010"/>
</g>
<g transform="translate(383.0,40.9) scale(0.88) translate(-383.0,-40.9)">
<ellipse cx="383.0" cy="41.1" rx="5" ry="3.2" fill="#18d0d8" stroke="#1028f0" stroke-width="1.3"/>
<path d="M383.0,38.5 L383.0,43.7" fill="none" stroke="#101010" stroke-width="0.8"/>
</g>
<g transform="translate(394.2,40.9) scale(0.88) translate(-394.2,-40.9)">
<polygon points="389.6,42.9 391.6,40.3 394.2,37.7 396.8,40.3 398.8,42.9 394.2,44.3" fill="#1028f0" stroke="#e020e0" stroke-width="0.4"/>
<ellipse cx="394.2" cy="42.3" rx="3.2" ry="1.5" fill="#18d0d8"/>
</g>
<g transform="translate(405.7,40.9) scale(0.88) translate(-405.7,-40.9)">
<polygon points="400.7,40.5 410.7,40.5 409.3,43.1 402.1,43.1" fill="#18d0d8" stroke="#1028f0" stroke-width="1.1"/>
<rect x="404.3" y="39.1" width="2.8" height="1.4" fill="#1028f0"/>
</g>
<g transform="translate(417.0,40.9) scale(0.88) translate(-417.0,-40.9)">
<polygon points="412.0,40.5 422.0,40.5 420.6,43.1 413.4,43.1" fill="#18d0d8" stroke="#1028f0" stroke-width="1.1"/>
<rect x="415.6" y="39.1" width="2.8" height="1.4" fill="#1028f0"/>
</g>
<g transform="translate(428.2,40.9) scale(0.88) translate(-428.2,-40.9)">
<ellipse cx="428.2" cy="41.1" rx="5" ry="3.1" fill="#1028f0" stroke="#e020e0" stroke-width="0.4"/>
<polygon points="424.6,41.1 428.0,39.1 428.0,40.3 431.6,40.3 431.6,41.9 428.0,41.9 428.0,43.1" fill="#18d0d8"/>
</g>
<g transform="translate(439.4,40.9) scale(0.88) translate(-439.4,-40.9)">
<ellipse cx="439.4" cy="41.1" rx="5" ry="3" fill="#1028f0" stroke="#e020e0" stroke-width="0.4"/>
<rect x="436.2" y="40.1" width="6.4" height="2" fill="#18d0d8"/>
<polygon points="442.6,39.7 444.4,41.1 442.6,42.5" fill="#101010"/>
</g>
<g transform="translate(455.4,40.9) scale(0.88) translate(-455.4,-40.9)">
<polygon points="451.4,40.9 455.4,36.9 459.4,40.9 459.4,44.9 451.4,44.9" fill="#c020d0" stroke="#1820c0" stroke-width="0.8"/>
<rect x="454.4" y="41.9" width="2.2" height="3" fill="#1820c0"/>
<rect x="457.0" y="36.7" width="1.4" height="2.6" fill="#f02020"/>
</g>
<g transform="translate(477.0,40.9) scale(0.88) translate(-477.0,-40.9)">
<polygon points="472.6,37.5 475.4,36.5 481.0,42.9 479.4,45.3 477.2,44.9" fill="#e8f0ff" stroke="#1828b0" stroke-width="0.9"/>
<path d="M474.0,38.3 L479.0,43.9" fill="none" stroke="#18d0d8" stroke-width="1.2"/>
<path d="M479.4,36.5 L479.4,39.3" fill="none" stroke="#2428e0" stroke-width="0.7"/>
<path d="M478.0,37.9 L480.8,37.9" fill="none" stroke="#2428e0" stroke-width="0.7"/>
</g>
<g transform="translate(493.0,40.9) scale(0.88) translate(-493.0,-40.9)">
<ellipse cx="492.2" cy="39.9" rx="2.8" ry="2.8" fill="#fff" stroke="#101010" stroke-width="0.9"/>
<path d="M494.2,42.1 L496.8,44.9" fill="none" stroke="#108888" stroke-width="1.3"/>
<path d="M492.2,38.3 L492.2,41.5" fill="none" stroke="#101010" stroke-width="0.6"/>
<path d="M490.6,39.9 L493.8,39.9" fill="none" stroke="#101010" stroke-width="0.6"/>
</g>
<g transform="translate(504.4,40.9) scale(0.88) translate(-504.4,-40.9)">
<ellipse cx="503.6" cy="39.9" rx="2.8" ry="2.8" fill="#fff" stroke="#101010" stroke-width="0.9"/>
<path d="M505.6,42.1 L508.2,44.9" fill="none" stroke="#108888" stroke-width="1.3"/>
<circle cx="503.6" cy="39.9" r="1.2" fill="#101010"/>
</g>
<g transform="translate(515.8,40.9) scale(0.88) translate(-515.8,-40.9)">
<ellipse cx="515.0" cy="39.9" rx="2.8" ry="2.8" fill="#fff" stroke="#101010" stroke-width="0.9"/>
<path d="M517.0,42.1 L519.6,44.9" fill="none" stroke="#108888" stroke-width="1.3"/>
<path d="M519.2,37.3 L519.2,40.9" fill="none" stroke="#101010" stroke-width="0.9"/>
<path d="M518.4,37.5 L520.2,37.5" fill="none" stroke="#101010" stroke-width="0.6"/>
</g>
<g transform="translate(527.2,40.9) scale(0.88) translate(-527.2,-40.9)">
<ellipse cx="526.4" cy="39.9" rx="2.8" ry="2.8" fill="#f4f4f4" stroke="#b0b0b0" stroke-width="0.9"/>
<path d="M528.4,42.1 L531.0,44.9" fill="none" stroke="#b0b0b0" stroke-width="1.2"/>
<path d="M525.0,39.9 L527.8,39.9" fill="none" stroke="#b0b0b0" stroke-width="0.7"/>
</g>
<g transform="translate(538.6,40.9) scale(0.88) translate(-538.6,-40.9)">
<path d="M535.0,40.3 A3.8,3.8 0 0 1 541.6,38.5 M542.4,41.5 A3.8,3.8 0 0 1 535.6,43.5" fill="none" stroke="#101010" stroke-width="1.3"/>
<polygon points="540.0,36.5 543.2,37.5 540.8,39.9" fill="#101010"/>
<polygon points="537.2,45.5 534.0,44.3 536.4,42.1" fill="#101010"/>
</g>
<g transform="translate(550.0,40.9) scale(0.88) translate(-550.0,-40.9)">
<path d="M550.0,36.7 L550.0,45.3" fill="none" stroke="#101010" stroke-width="1.3"/>
<path d="M545.6,41.0 L554.4,41.0" fill="none" stroke="#101010" stroke-width="1.3"/>
<polygon points="550.0,35.9 551.8,38.1 548.2,38.1" fill="#101010"/>
<polygon points="550.0,46.1 551.8,43.9 548.2,43.9" fill="#101010"/>
<polygon points="545.0,41.0 547.2,39.3 547.2,42.7" fill="#101010"/>
<polygon points="555.0,41.0 552.8,39.3 552.8,42.7" fill="#101010"/>
</g>
<g transform="translate(579.3,40.9) scale(0.88) translate(-579.3,-40.9)">
<rect x="575.1" y="39.1" width="5.4" height="5.8" fill="#fff" stroke="#101010" stroke-width="0.9"/>
<rect x="577.7" y="36.9" width="5.4" height="5.8" fill="none" stroke="#101010" stroke-width="0.9"/>
<path d="M575.1,39.1 L577.7,36.9" fill="none" stroke="#101010" stroke-width="0.7"/>
<path d="M580.5,44.9 L583.1,42.7" fill="none" stroke="#101010" stroke-width="0.7"/>
<path d="M580.5,39.1 L583.1,36.9" fill="none" stroke="#101010" stroke-width="0.7"/>
</g>
<g transform="translate(590.4,40.9) scale(0.88) translate(-590.4,-40.9)">
<polygon points="586.2,38.9 588.4,36.9 594.4,36.9 594.4,42.9 592.2,44.9 586.2,44.9" fill="#18d0d8" stroke="#101010" stroke-width="0.9"/>
<rect x="586.2" y="38.9" width="6" height="6" fill="#18d0d8" stroke="#101010" stroke-width="0.9"/>
<path d="M592.2,38.9 L594.4,36.9" fill="none" stroke="#101010" stroke-width="0.8"/>
</g>
<g transform="translate(601.6,40.9) scale(0.88) translate(-601.6,-40.9)">
<polygon points="597.4,38.9 599.6,36.9 605.6,36.9 605.6,42.9 603.4,44.9 597.4,44.9" fill="#10b8c0"/>
<rect x="597.4" y="38.9" width="6" height="6" fill="#28e0e8"/>
<polygon points="597.4,38.9 599.6,36.9 605.6,36.9 603.4,38.9" fill="#80f0f4"/>
</g>
<g transform="translate(613.4,40.9) scale(0.88) translate(-613.4,-40.9)">
<polygon points="610.2,39.3 612.0,37.7 617.4,37.7 617.4,42.9 615.6,44.9 610.2,44.9" fill="#18d0d8" stroke="#101010" stroke-width="0.9"/>
<rect x="610.2" y="39.3" width="5.4" height="5.6" fill="#18d0d8" stroke="#101010" stroke-width="0.9"/>
<circle cx="610.4" cy="38.3" r="1.4" fill="#f02020"/>
</g>
<g transform="translate(624.6,40.9) scale(0.88) translate(-624.6,-40.9)">
<polygon points="620.6,39.3 624.6,37.3 628.6,39.3 627.2,43.5 624.6,44.9 622.0,43.5" fill="#b0b0b0" stroke="#909090" stroke-width="0.6"/>
</g>
<g transform="translate(636.4,40.9) scale(0.88) translate(-636.4,-40.9)">
<rect x="632.0" y="37.9" width="8.6" height="5" fill="#fff" stroke="#303030" stroke-width="0.8"/>
<path d="M633.0,40.5 L639.8,40.5" fill="none" stroke="#f02020" stroke-width="1.6" stroke-dasharray="2.2 1"/>
<circle cx="640.0" cy="44.5" r="0.9" fill="#101010"/>
</g>
</svg>
</div></body></html>
